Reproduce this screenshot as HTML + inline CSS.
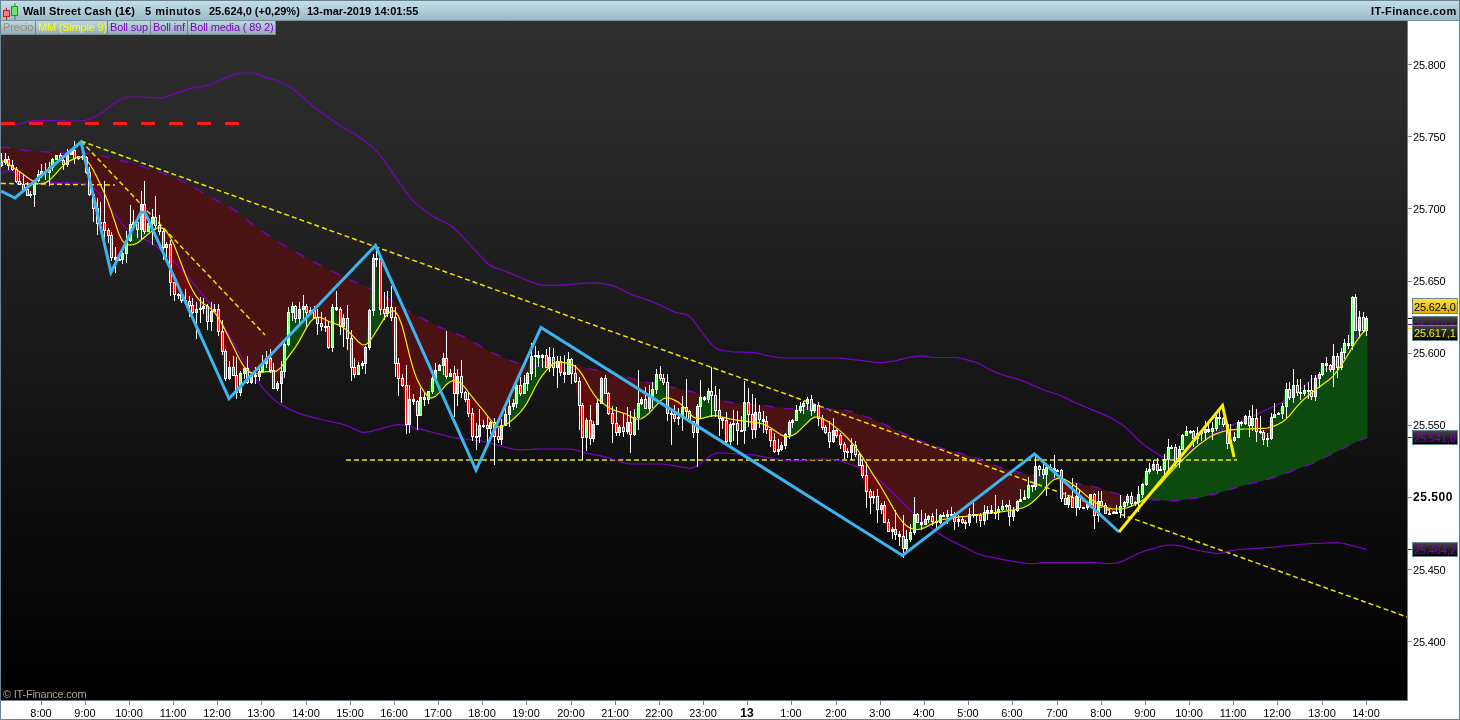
<!DOCTYPE html>
<html><head><meta charset="utf-8"><style>
*{margin:0;padding:0;box-sizing:border-box}
html,body{width:1460px;height:720px;overflow:hidden;background:#fff;font-family:"Liberation Sans",sans-serif}
#frame{position:absolute;left:0;top:0;width:1460px;height:720px;border:1px solid #6b838e}
#hdr{position:absolute;left:1px;top:1px;width:1458px;height:20px;background:linear-gradient(#c1dfeb,#9cbbc8);border-bottom:1px solid #7d939c}
#hdr span{will-change:transform;position:absolute;top:4px;font-size:11px;line-height:12px;font-weight:bold;color:#000;white-space:nowrap}
#leg{position:absolute;left:1px;top:21px;height:14px;display:flex}
#leg div span{will-change:transform;display:inline-block}
#leg div{height:14px;font-size:11px;line-height:13px;padding:0 0 0 2px;overflow:hidden;letter-spacing:-0.15px;background:linear-gradient(#bcd6e2,#96aeba);border-right:1px solid #6f858e;border-bottom:1px solid #7a8f98;white-space:nowrap}
.tk{position:absolute;left:1408px;width:4px;height:1px;background:#6c8a98}
.yl{will-change:transform;position:absolute;left:1413px;font-size:11px;line-height:14px;color:#000;letter-spacing:-0.2px}
.tt{position:absolute;top:701px;width:1px;height:4px;background:#6c8a98}
.xl{will-change:transform;position:absolute;top:707px;width:60px;text-align:center;font-size:11px;line-height:13px;color:#000}
.lab span{will-change:transform;display:inline-block}
.lab{position:absolute;left:1412px;width:46px;height:16px;font-size:11px;line-height:14px;padding-left:1px;border:1px solid #6a8894;letter-spacing:-0.15px}
.mk{position:absolute;left:1408px;width:4px;height:1px}
</style></head><body>
<div id="frame"></div>
<div id="hdr">
<svg style="position:absolute;left:0;top:0" width="20" height="20" viewBox="0 0 20 20">
<rect x="5" y="7" width="1" height="12" fill="#c02020"/>
<rect x="2.5" y="9.5" width="6" height="6" fill="#f08080" stroke="#c02020" stroke-width="1"/>
<rect x="13.5" y="2" width="1" height="17" fill="#10a010"/>
<rect x="10.5" y="5.5" width="6" height="9" fill="#70e070" stroke="#10a010" stroke-width="1"/>
</svg>
<span style="left:22px;letter-spacing:0.15px">Wall Street Cash (1€)</span>
<span style="left:144px;letter-spacing:0.5px">5 minutos</span>
<span style="left:208px">25.624,0 (+0,29%)</span>
<span style="left:306px">13-mar-2019 14:01:55</span>
<span style="right:2px;letter-spacing:0.4px">IT-Finance.com</span>
</div>
<svg width="1406" height="679" viewBox="1 21 1406 679" style="position:absolute;left:1px;top:21px">
<defs><linearGradient id="bg" x1="0" y1="0" x2="0" y2="1"><stop offset="0" stop-color="#303030"/><stop offset="0.98" stop-color="#000"/></linearGradient></defs>
<rect x="1" y="21" width="1406" height="679" fill="url(#bg)"/>
<polygon fill="#4a1212" points="0.8,162 4.5,159 8.2,165 11.9,169 15.6,181 19.3,184 22.9,189 26.6,195 30.3,194 34,180 37.7,174 41.3,171 45,172 48.7,167 52.4,159 56.1,155 59.7,160 63.4,164 67.1,154 68,153 68,153 67.1,153 63.4,153 59.7,152.9 56.1,152.6 52.4,152.3 48.7,152 45,151.8 41.3,151.5 37.7,151.3 34,151.1 30.3,150.9 26.6,150.6 22.9,150.1 19.3,149.5 15.6,148.7 11.9,147.9 8.2,147.5 4.5,147.5 0.8,147.8"/>
<polygon fill="#4a1212" points="72.2,153 74.5,158 78.2,156 81.8,157 85.5,172 89.2,194 92.9,208 96.6,223 100.2,222 103.9,230 107.6,235 111.3,257 115,259 118.6,259 122.3,253 126,240 129.7,224 133.4,222 137,229 140.7,204 144.4,231 148.1,223 151.8,217 155.5,225 159.1,231 162.8,247 166.5,244 170.2,282 173.9,294 177.5,294 181.2,300 184.9,301 188.6,305 192.3,312 195.9,309 199.6,308 203.3,306 207,321 210.7,311 214.3,309 218,331 221.7,351 225.4,378 229.1,367 232.8,375 236.4,392 240.1,373 243.8,368 247.5,382 251.2,375 254.8,376 258.5,371 262.2,363 265.9,358 269.6,370 273.2,388 276.9,383 280.6,371 284.3,344 288,312 291.6,306 295.3,318 299,309 302.7,306 306.4,312 310.1,310 313.7,317 317.4,323 321.1,326 324.8,326 328.5,347 332.1,307 335.8,309 339.5,326 343.2,318 346.9,338 350.5,367 354.2,374 357.9,365 361.6,363 365.3,347 368.9,310 370.4,289 370.4,289 368.9,288.2 365.3,286.3 361.6,284.6 357.9,283.2 354.2,281.7 350.5,280.1 346.9,278.4 343.2,276.6 339.5,274.8 335.8,272.9 332.1,271.1 328.5,269.2 324.8,267.4 321.1,265.5 317.4,263.7 313.7,261.9 310.1,260 306.4,258 302.7,255.9 299,253.9 295.3,251.8 291.6,249.8 288,247.7 284.3,245.5 280.6,243.2 276.9,240.9 273.2,238.6 269.6,236.2 265.9,233.8 262.2,231.2 258.5,228.6 254.8,226 251.2,223.2 247.5,220.4 243.8,217.3 240.1,214.3 236.4,211.4 232.8,209 229.1,206.9 225.4,205 221.7,203.1 218,201.2 214.3,199.3 210.7,197.3 207,195.2 203.3,193 199.6,190.8 195.9,188.6 192.3,186.4 188.6,184.5 184.9,182.8 181.2,181.1 177.5,179.5 173.9,177.9 170.2,176.3 166.5,174.7 162.8,173.3 159.1,172 155.5,170.8 151.8,169.6 148.1,168.5 144.4,167.4 140.7,166.4 137,165.3 133.4,164.2 129.7,163.1 126,161.9 122.3,160.8 118.6,159.8 115,158.9 111.3,158 107.6,157.1 103.9,156.2 100.2,155.2 96.6,154.5 92.9,154 89.2,153.6 85.5,153.3 81.8,153.1 78.2,153 74.5,153 72.2,153"/>
<polygon fill="#4a1212" points="378.9,293.6 380,309 383.7,313 387.4,307 391,317 394.7,363 398.4,378 402.1,385 405.8,424 409.4,399 413.1,401 416.8,415 420.5,397 424.2,399 427.8,391 431.5,378 435.2,370 438.9,365 442.6,358 446.2,376 449.9,373 453.6,393 457.3,376 461,392 464.7,399 468.3,413 472,436 475.7,436 479.4,425 483.1,425 486.7,428 490.4,422 494.1,436 497.8,439 501.5,425 505.1,414 508.8,406 512.5,403 516.2,385 519.9,393 523.6,383 527.2,373 528.9,365.3 528.9,365.3 527.2,365.1 523.6,364.5 519.9,363.7 516.2,362.5 512.5,361 508.8,359.5 505.1,358.1 501.5,356.6 497.8,355.1 494.1,353.6 490.4,352 486.7,350 483.1,347.8 479.4,345.6 475.7,343.4 472,341.2 468.3,339 464.7,337.1 461,335.5 457.3,334.1 453.6,332.7 449.9,331.3 446.2,329.9 442.6,328.4 438.9,326.8 435.2,325.1 431.5,323.3 427.8,321.4 424.2,319.6 420.5,317.7 416.8,315.8 413.1,313.8 409.4,311.5 405.8,309.2 402.1,306.9 398.4,304.6 394.7,302.4 391,300.3 387.4,298.3 383.7,296.3 380,294.2 378.9,293.6"/>
<polygon fill="#4a1212" points="545.5,366.7 545.6,367 545.7,366.7 545.7,366.7 545.6,366.7 545.5,366.7"/>
<polygon fill="#4a1212" points="552.7,366.3 553,367 553.4,366.3 553.4,366.3 553,366.3 552.7,366.3"/>
<polygon fill="#4a1212" points="558.4,366 560.4,372 564,374 566.1,365.6 566.1,365.6 564,365.7 560.4,365.9 558.4,366"/>
<polygon fill="#4a1212" points="569.4,365.4 571.4,373 575.1,381 578.8,405 582.4,437 586.1,420 589.8,438 593.5,424 597.2,403 600.9,378 604.5,393 608.2,413 611.9,423 615.6,432 619.3,427 622.9,431 626.6,422 630.3,434 634,417 637.7,403 641.3,399 645,408 648.7,397 652.4,389 653.7,383.7 653.7,383.7 652.4,383.5 648.7,382.7 645,382 641.3,381.2 637.7,380.2 634,379.1 630.3,377.9 626.6,376.7 622.9,375.5 619.3,374.4 615.6,373.3 611.9,372.5 608.2,371.9 604.5,371.3 600.9,370.7 597.2,370.1 593.5,369.5 589.8,368.8 586.1,367.8 582.4,366.6 578.8,365.7 575.1,365.3 571.4,365.3 569.4,365.4"/>
<polygon fill="#4a1212" points="663.9,385.8 667.1,413 670.8,414 674.5,418 678.2,417 681.8,407 685.5,411 689.2,421 692.9,432 696.6,406 700.2,397 703.9,399 705.3,396 705.3,396 703.9,395.5 700.2,394.3 696.6,393.1 692.9,392 689.2,391 685.5,390.1 681.8,389.4 678.2,388.6 674.5,387.9 670.8,387.2 667.1,386.4 663.9,385.8"/>
<polygon fill="#4a1212" points="712,398 715,410 718.6,418 722.3,420 726,441 729.7,424 733.4,423 737,430 740.7,430 744.2,403.7 744.2,403.7 740.7,403.4 737,403.1 733.4,402.8 729.7,402.2 726,401.5 722.3,400.6 718.6,399.7 715,398.7 712,398"/>
<polygon fill="#4a1212" points="744.9,403.7 748.1,414 751.8,429 755.5,412 759.1,419 762.8,421 766.5,429 770.2,440 773.9,451 777.5,449 781.2,445 784.9,434 788.6,422 792.3,420 795.9,410 796.9,409 796.9,409 795.9,409 792.3,408.9 788.6,408.7 784.9,408.3 781.2,407.8 777.5,407.3 773.9,406.8 770.2,406.4 766.5,405.9 762.8,405.4 759.1,405 755.5,404.6 751.8,404.3 748.1,404 744.9,403.7"/>
<polygon fill="#4a1212" points="810.3,409 810.7,410 811.4,409 811.4,409 810.7,409 810.3,409"/>
<polygon fill="#4a1212" points="815.5,409 818,418 821.7,427 825.4,432 829.1,441 832.8,430 836.4,435 840.1,444 843.8,451 847.5,452 851.2,445 854.8,454 858.5,465 862.2,475 865.9,491 869.6,497 873.2,496 876.9,509 880.6,505 884.3,522 888,531 891.7,529 895.3,534 899,536 902.7,548 906.4,539 910.1,532 913.7,514 917.4,522 921.1,524 924.8,519 928.5,516 932.1,521 935.8,522 939.5,515 943.2,516 946.9,514 950.5,514 954.2,521 957.9,519 961.6,522 965.3,522 969,514 972.6,514 976.3,515 980,520 983.7,512 987.4,510 991,512 994.7,512 998.4,509 1002.1,506 1005.8,505 1009.4,516 1013.1,510 1016.8,501 1020.5,499 1024.2,497 1027.8,485 1031.5,486 1033.5,475.5 1033.5,475.5 1031.5,475.2 1027.8,474.4 1024.2,473.6 1020.5,472.7 1016.8,471.8 1013.1,470.9 1009.4,470.1 1005.8,469.1 1002.1,467.9 998.4,466.5 994.7,465.2 991,463.8 987.4,462.4 983.7,461.1 980,459.7 976.3,458.3 972.6,457 969,455.8 965.3,454.7 961.6,453.7 957.9,452.7 954.2,451.7 950.5,450.7 946.9,449.6 943.2,448.6 939.5,447.6 935.8,446.6 932.1,445.5 928.5,444.2 924.8,442.7 921.1,441.1 917.4,439.5 913.7,437.8 910.1,436.2 906.4,434.6 902.7,432.9 899,431.2 895.3,429.5 891.7,427.8 888,426.1 884.3,424.4 880.6,422.7 876.9,421 873.2,419.5 869.6,418 865.9,416.8 862.2,415.5 858.5,414.2 854.8,413 851.2,411.7 847.5,410.8 843.8,410.2 840.1,409.9 836.4,409.6 832.8,409.3 829.1,409.1 825.4,409 821.7,409 818,409 815.5,409"/>
<polygon fill="#4a1212" points="1058.6,479.7 1061,498 1064.7,504 1068.3,497 1072,507 1075.7,496 1079.4,507 1083.1,507 1086.7,504 1090.4,494 1094.1,515 1097.8,501 1101.5,505 1105.1,513 1108.8,513 1112.5,512 1116.2,512 1119.9,506 1123.6,502 1127.2,496 1130.9,503 1134.6,502 1136.6,497.7 1136.6,497.7 1134.6,497.4 1130.9,496.7 1127.2,495.9 1123.6,495.2 1119.9,494.4 1116.2,493.5 1112.5,492.4 1108.8,491.3 1105.1,490.2 1101.5,489 1097.8,487.9 1094.1,486.9 1090.4,486.1 1086.7,485.3 1083.1,484.6 1079.4,483.9 1075.7,483.1 1072,482.4 1068.3,481.7 1064.7,480.9 1061,480.2 1058.6,479.7"/>
<polygon fill="#0d4a0d" points="68,153 70.8,150 72.2,153 72.2,153 70.8,153 68,153"/>
<polygon fill="#0d4a0d" points="370.4,289 372.6,258 376.3,258 378.9,293.6 378.9,293.6 376.3,292.2 372.6,290.2 370.4,289"/>
<polygon fill="#0d4a0d" points="528.9,365.3 530.9,356 534.6,355 538.3,357 542,355 545.5,366.7 545.5,366.7 542,366.8 538.3,366.6 534.6,366.2 530.9,365.6 528.9,365.3"/>
<polygon fill="#0d4a0d" points="545.7,366.7 549.3,357 552.7,366.3 552.7,366.3 549.3,366.5 545.7,366.7"/>
<polygon fill="#0d4a0d" points="553.4,366.3 556.7,361 558.4,366 558.4,366 556.7,366.1 553.4,366.3"/>
<polygon fill="#0d4a0d" points="566.1,365.6 567.7,359 569.4,365.4 569.4,365.4 567.7,365.5 566.1,365.6"/>
<polygon fill="#0d4a0d" points="653.7,383.7 656.1,374 659.7,378 663.4,382 663.9,385.8 663.9,385.8 663.4,385.7 659.7,384.9 656.1,384.2 653.7,383.7"/>
<polygon fill="#0d4a0d" points="705.3,396 707.6,391 711.3,395 712,398 712,398 711.3,397.8 707.6,396.7 705.3,396"/>
<polygon fill="#0d4a0d" points="744.2,403.7 744.4,402 744.9,403.7 744.9,403.7 744.4,403.7 744.2,403.7"/>
<polygon fill="#0d4a0d" points="796.9,409 799.6,406 803.3,403 807,399 810.3,409 810.3,409 807,409 803.3,409 799.6,409 796.9,409"/>
<polygon fill="#0d4a0d" points="811.4,409 814.4,405 815.5,409 815.5,409 814.4,409 811.4,409"/>
<polygon fill="#0d4a0d" points="1033.5,475.5 1035.2,466 1038.9,469 1042.6,474 1046.3,467 1049.9,468 1053.6,470 1057.3,470 1058.6,479.7 1058.6,479.7 1057.3,479.5 1053.6,478.8 1049.9,478.2 1046.3,477.6 1042.6,477 1038.9,476.4 1035.2,475.8 1033.5,475.5"/>
<polygon fill="#0d4a0d" points="1136.6,497.7 1138.3,494 1142,484 1145.6,471 1149.3,469 1153,464 1156.7,470 1160.4,469 1164,459 1167.7,447 1171.4,447 1175.1,461 1178.8,449 1182.5,435 1186.1,431 1189.8,431 1193.5,438 1197.2,433 1200.9,432 1204.5,429 1208.2,431 1211.9,428 1215.6,417 1219.3,418 1222.9,424 1226.6,443 1230.3,440 1234,437 1237.7,422 1241.3,423 1245,416 1248.7,425 1252.4,418 1256.1,431 1259.8,432 1263.4,439 1267.1,438 1270.8,417 1274.5,414 1278.2,413 1281.8,406 1285.5,389 1289.2,397 1292.9,385 1296.6,392 1300.2,393 1303.9,390 1307.6,390 1311.3,396 1315,378 1318.6,374 1322.3,363 1326,365 1329.7,369 1333.4,356 1337.1,367 1340.7,352 1344.4,343 1348.1,345 1351.8,297 1355.5,330 1359.1,317 1362.8,330 1366.5,318 1367.5,318 1367.5,438.1 1366.5,438.1 1362.8,439 1359.1,440.6 1355.5,442.3 1351.8,444.1 1348.1,446 1344.4,447.8 1340.7,449.6 1337.1,451.5 1333.4,453.3 1329.7,455.2 1326,457 1322.3,458.8 1318.6,460.7 1315,462.4 1311.3,463.9 1307.6,465.3 1303.9,466.7 1300.2,468 1296.6,469.4 1292.9,470.8 1289.2,472.1 1285.5,473.4 1281.8,474.7 1278.2,476.1 1274.5,477.4 1270.8,478.6 1267.1,479.7 1263.4,480.6 1259.8,481.5 1256.1,482.3 1252.4,483.2 1248.7,484.1 1245,485.1 1241.3,486.1 1237.7,487.2 1234,488.3 1230.3,489.4 1226.6,490.5 1222.9,491.6 1219.3,492.6 1215.6,493.6 1211.9,494.5 1208.2,495.4 1204.5,496.4 1200.9,497.2 1197.2,497.9 1193.5,498.4 1189.8,498.9 1186.1,499.4 1182.5,500 1178.8,500.5 1175.1,500.8 1171.4,500.8 1167.7,500.7 1164,500.5 1160.4,500.3 1156.7,500.2 1153,499.9 1149.3,499.5 1145.6,499 1142,498.5 1138.3,498 1136.6,497.7"/>
<polygon fill="#680a0a" points="0.8,162 2.3,160.8 2.3,160.8 0.8,160.2"/>
<polygon fill="#680a0a" points="7.3,163.5 8.2,165 11.9,169 15.6,181 19.3,184 22.9,189 26.6,195 30.3,194 33.5,181.7 33.5,181.7 30.3,179.5 26.6,176.7 22.9,173.9 19.3,171.4 15.6,169 11.9,166.5 8.2,164.1 7.3,163.5"/>
<polygon fill="#680a0a" points="82,157.5 85.5,172 89.2,194 92.9,208 96.6,223 100.2,222 103.9,230 107.6,235 111.3,257 115,259 118.6,259 122.3,253 125,243.5 125,243.5 122.3,240.7 118.6,233.3 115,222.2 111.3,211.1 107.6,201 103.9,192 100.2,184 96.6,176.4 92.9,169.2 89.2,163.3 85.5,159.2 82,157.5"/>
<polygon fill="#680a0a" points="157.2,227.9 159.1,231 162.8,247 166.5,244 170.2,282 173.9,294 177.5,294 181.2,300 184.9,301 188.6,305 192.3,312 195.9,309 199.6,308 203.3,306 207,321 210.7,311 212.3,310.1 212.3,310.1 210.7,308.6 207,305.9 203.3,303.7 199.6,300.4 195.9,295.9 192.3,289.8 188.6,282.3 184.9,273.2 181.2,263.5 177.5,253.9 173.9,244.6 170.2,237.2 166.5,231.6 162.8,228.3 159.1,227.3 157.2,227.9"/>
<polygon fill="#680a0a" points="215,312.9 218,331 221.7,351 225.4,378 229.1,367 232.8,375 236.4,392 240.1,373 243.8,368 247.5,382 251.2,375 254.8,376 256.5,373.7 256.5,373.7 254.8,373.9 251.2,373.1 247.5,370.6 243.8,366.4 240.1,360.2 236.4,352.9 232.8,345.5 229.1,338.1 225.4,330.8 221.7,323.4 218,317.1 215,312.9"/>
<polygon fill="#680a0a" points="269.9,371.7 273.2,388 276.9,383 280.6,371 281.1,367.1 281.1,367.1 280.6,367.8 276.9,370.9 273.2,371.8 269.9,371.7"/>
<polygon fill="#680a0a" points="314.5,318.3 317.4,323 321.1,326 324.8,326 328.5,347 330.7,322.2 330.7,322.2 328.5,321.2 324.8,319.2 321.1,317.6 317.4,317.1 314.5,318.3"/>
<polygon fill="#680a0a" points="339.4,325.4 339.5,326 339.7,325.5 339.7,325.5 339.5,325.4 339.4,325.4"/>
<polygon fill="#680a0a" points="345.2,329 346.9,338 350.5,367 354.2,374 357.9,365 361.6,363 365.3,347 365.5,344.8 365.5,344.8 365.3,344.9 361.6,344.5 357.9,341.3 354.2,337.4 350.5,333.5 346.9,330.2 345.2,329"/>
<polygon fill="#680a0a" points="389.4,312.4 391,317 394.7,363 398.4,378 402.1,385 405.8,424 409.4,399 413.1,401 416.8,415 420.5,397 424.2,399 426.3,394.4 426.3,394.4 424.2,391.9 420.5,386.1 416.8,378.8 413.1,368.4 409.4,354.9 405.8,340 402.1,325.7 398.4,316 394.7,310.8 391,311.2 389.4,312.4"/>
<polygon fill="#680a0a" points="451.4,381.2 453.6,393 456.2,380.9 456.2,380.9 453.6,380.4 451.4,381.2"/>
<polygon fill="#680a0a" points="458.7,382 461,392 464.7,399 468.3,413 472,436 475.7,436 479.4,425 483.1,425 486.7,428 490.4,422 494.1,436 497.8,439 501,426.9 501,426.9 497.8,426.8 494.1,424.3 490.4,419.7 486.7,414.9 483.1,410.2 479.4,405.8 475.7,401.3 472,396.7 468.3,392 464.7,387.1 461,383.4 458.7,382"/>
<polygon fill="#680a0a" points="552.1,364.7 553,367 555.7,362.6 555.7,362.6 553,363.9 552.1,364.7"/>
<polygon fill="#680a0a" points="557.1,362.1 560.4,372 564,374 566.7,363 566.7,363 564,362.6 560.4,361.9 557.1,362.1"/>
<polygon fill="#680a0a" points="568.9,363.6 571.4,373 575.1,381 578.8,405 582.4,437 586.1,420 589.8,438 593.5,424 597.2,403 597.7,399.1 597.7,399.1 597.2,398.6 593.5,393.9 589.8,388 586.1,381.2 582.4,374.9 578.8,369.9 575.1,366.3 571.4,364.4 568.9,363.6"/>
<polygon fill="#680a0a" points="607,406.3 608.2,413 611.9,423 615.6,432 619.3,427 622.9,431 626.6,422 630.3,434 633.7,418.3 633.7,418.3 630.3,416.4 626.6,414.1 622.9,413 619.3,411.9 615.6,410.8 611.9,409.2 608.2,407.1 607,406.3"/>
<polygon fill="#680a0a" points="665.4,398.2 667.1,413 670.8,414 674.5,418 678.2,417 681.8,407 685.5,411 689.2,421 692.9,432 694.9,417.8 694.9,417.8 692.9,416.8 689.2,413.2 685.5,408.9 681.8,405.1 678.2,402.1 674.5,400.1 670.8,398.5 667.1,397.7 665.4,398.2"/>
<polygon fill="#680a0a" points="717.7,415.9 718.6,418 722.3,420 726,441 729.7,424 733.4,423 737,430 740.7,430 741.9,420.8 741.9,420.8 740.7,420.6 737,420.1 733.4,419.5 729.7,418.8 726,417.9 722.3,417 718.6,416 717.7,415.9"/>
<polygon fill="#680a0a" points="750.1,422 751.8,429 753.2,422.4 753.2,422.4 751.8,422.2 750.1,422"/>
<polygon fill="#680a0a" points="764.5,424.6 766.5,429 770.2,440 773.9,451 777.5,449 781.2,445 784.2,436.1 784.2,436.1 781.2,434.9 777.5,432.5 773.9,430 770.2,427.5 766.5,425.4 764.5,424.6"/>
<polygon fill="#680a0a" points="817.7,416.9 818,418 821.7,427 825.4,432 829.1,441 832.8,430 836.4,435 840.1,444 843.8,451 847.5,452 851.2,445 854.8,454 858.5,465 862.2,475 865.9,491 869.6,497 873.2,496 876.9,509 880.6,505 884.3,522 888,531 891.7,529 895.3,534 899,536 902.7,548 906.4,539 910.1,532 910.8,528.3 910.8,528.3 910.1,528 906.4,525.7 902.7,522.1 899,517.5 895.3,511.8 891.7,505.4 888,498.9 884.3,492.5 880.6,486.3 876.9,480.4 873.2,474.8 869.6,469 865.9,462.8 862.2,456.6 858.5,451.2 854.8,446.5 851.2,442.2 847.5,438 843.8,434.3 840.1,430.9 836.4,427.9 832.8,424.9 829.1,422.3 825.4,420.2 821.7,418.4 818,416.8 817.7,416.9"/>
<polygon fill="#680a0a" points="952.6,517.9 954.2,521 957.9,519 961.6,522 965.3,522 968.1,515.9 968.1,515.9 965.3,516.3 961.6,516.7 957.9,517.2 954.2,517.7 952.6,517.9"/>
<polygon fill="#680a0a" points="976.2,515 976.3,515 980,520 982.7,514.2 982.7,514.2 980,514.5 976.3,514.9 976.2,515"/>
<polygon fill="#680a0a" points="1007.7,510.8 1009.4,516 1013.1,510 1013.1,510 1009.4,510.6 1007.7,510.8"/>
<polygon fill="#680a0a" points="1058.4,478.3 1061,498 1064.7,504 1068.3,497 1072,507 1075.7,496 1079.4,507 1083.1,507 1086.7,504 1089,497.9 1089,497.9 1086.7,496 1083.1,492.9 1079.4,489.7 1075.7,486.8 1072,484 1068.3,481.5 1064.7,479.4 1061,478.3 1058.4,478.3"/>
<polygon fill="#680a0a" points="1091.5,499.9 1094.1,515 1097.1,503.6 1097.1,503.6 1094.1,501.8 1091.5,499.9"/>
<polygon fill="#680a0a" points="1101.8,505.7 1105.1,513 1108.8,513 1112.5,512 1116.2,512 1118,509 1118,509 1116.2,509 1112.5,508.8 1108.8,508.2 1105.1,507.1 1101.8,505.7"/>
<polygon fill="#680a0a" points="1224.3,431.2 1226.6,443 1230.3,440 1234,437 1235.8,429.5 1235.8,429.5 1234,429.6 1230.3,429.9 1226.6,430.6 1224.3,431.2"/>
<polygon fill="#680a0a" points="1255.4,428.6 1256.1,431 1259.8,432 1263.4,439 1267.1,438 1268.9,427.6 1268.9,427.6 1267.1,428 1263.4,428.3 1259.8,428.4 1256.1,428.6 1255.4,428.6"/>
<polygon fill="#680a0a" points="1310.1,394.1 1311.3,396 1312,392.5 1312,392.5 1311.3,393.1 1310.1,394.1"/>
<polygon fill="#0d4a0d" points="2.3,160.8 4.5,159 7.3,163.5 7.3,163.5 4.5,161.7 2.3,160.8"/>
<polygon fill="#0d4a0d" points="33.5,181.7 34,180 37.7,174 41.3,171 45,172 48.7,167 52.4,159 56.1,155 59.7,160 63.4,164 67.1,154 70.8,150 74.5,158 78.2,156 81.8,157 82,157.5 82,157.5 81.8,157.4 78.2,157.4 74.5,158.5 70.8,160.4 67.1,162.6 63.4,165.6 59.7,169.2 56.1,173.3 52.4,177.4 48.7,180.7 45,182.9 41.3,183.8 37.7,183.5 34,182 33.5,181.7"/>
<polygon fill="#0d4a0d" points="125,243.5 126,240 129.7,224 133.4,222 137,229 140.7,204 144.4,231 148.1,223 151.8,217 155.5,225 157.2,227.9 157.2,227.9 155.5,228.5 151.8,231.3 148.1,234.3 144.4,237.3 140.7,240.5 137,243.2 133.4,244.6 129.7,244.9 126,244.5 125,243.5"/>
<polygon fill="#0d4a0d" points="212.3,310.1 214.3,309 215,312.9 215,312.9 214.3,312 212.3,310.1"/>
<polygon fill="#0d4a0d" points="256.5,373.7 258.5,371 262.2,363 265.9,358 269.6,370 269.9,371.7 269.9,371.7 269.6,371.7 265.9,371.6 262.2,372.3 258.5,373.5 256.5,373.7"/>
<polygon fill="#0d4a0d" points="281.1,367.1 284.3,344 288,312 291.6,306 295.3,318 299,309 302.7,306 306.4,312 310.1,310 313.7,317 314.5,318.3 314.5,318.3 313.7,318.6 310.1,322.2 306.4,327.9 302.7,334.6 299,341.4 295.3,347.3 291.6,352.3 288,357.4 284.3,362.9 281.1,367.1"/>
<polygon fill="#0d4a0d" points="330.7,322.2 332.1,307 335.8,309 339.4,325.4 339.4,325.4 335.8,324 332.1,322.8 330.7,322.2"/>
<polygon fill="#0d4a0d" points="339.7,325.5 343.2,318 345.2,329 345.2,329 343.2,327.5 339.7,325.5"/>
<polygon fill="#0d4a0d" points="365.5,344.8 368.9,310 372.6,258 376.3,258 380,309 383.7,313 387.4,307 389.4,312.4 389.4,312.4 387.4,314 383.7,319.2 380,325.2 376.3,331.1 372.6,337 368.9,342.3 365.5,344.8"/>
<polygon fill="#0d4a0d" points="426.3,394.4 427.8,391 431.5,378 435.2,370 438.9,365 442.6,358 446.2,376 449.9,373 451.4,381.2 451.4,381.2 449.9,381.7 446.2,384.7 442.6,389.1 438.9,393.1 435.2,396.6 431.5,398 427.8,396.4 426.3,394.4"/>
<polygon fill="#0d4a0d" points="456.2,380.9 457.3,376 458.7,382 458.7,382 457.3,381.1 456.2,380.9"/>
<polygon fill="#0d4a0d" points="501,426.9 501.5,425 505.1,414 508.8,406 512.5,403 516.2,385 519.9,393 523.6,383 527.2,373 530.9,356 534.6,355 538.3,357 542,355 545.6,367 549.3,357 552.1,364.7 552.1,364.7 549.3,367.3 545.6,371.3 542,375.9 538.3,381.5 534.6,388.3 530.9,395.7 527.2,402.6 523.6,408.2 519.9,412.6 516.2,416.3 512.5,419.8 508.8,422.7 505.1,425 501.5,426.9 501,426.9"/>
<polygon fill="#0d4a0d" points="555.7,362.6 556.7,361 557.1,362.1 557.1,362.1 556.7,362.1 555.7,362.6"/>
<polygon fill="#0d4a0d" points="566.7,363 567.7,359 568.9,363.6 568.9,363.6 567.7,363.2 566.7,363"/>
<polygon fill="#0d4a0d" points="597.7,399.1 600.9,378 604.5,393 607,406.3 607,406.3 604.5,404.6 600.9,401.9 597.7,399.1"/>
<polygon fill="#0d4a0d" points="633.7,418.3 634,417 637.7,403 641.3,399 645,408 648.7,397 652.4,389 656.1,374 659.7,378 663.4,382 665.4,398.2 665.4,398.2 663.4,398.7 659.7,401.6 656.1,405.6 652.4,409.6 648.7,413.5 645,416.6 641.3,418.8 637.7,419.5 634,418.4 633.7,418.3"/>
<polygon fill="#0d4a0d" points="694.9,417.8 696.6,406 700.2,397 703.9,399 707.6,391 711.3,395 715,410 717.7,415.9 717.7,415.9 715,415.6 711.3,415.9 707.6,416.8 703.9,417.8 700.2,418.7 696.6,418.6 694.9,417.8"/>
<polygon fill="#0d4a0d" points="741.9,420.8 744.4,402 748.1,414 750.1,422 750.1,422 748.1,421.7 744.4,421.2 741.9,420.8"/>
<polygon fill="#0d4a0d" points="753.2,422.4 755.5,412 759.1,419 762.8,421 764.5,424.6 764.5,424.6 762.8,424 759.1,423.2 755.5,422.7 753.2,422.4"/>
<polygon fill="#0d4a0d" points="784.2,436.1 784.9,434 788.6,422 792.3,420 795.9,410 799.6,406 803.3,403 807,399 810.7,410 814.4,405 817.7,416.9 817.7,416.9 814.4,417.2 810.7,419.3 807,423 803.3,426.7 799.6,430.4 795.9,433.4 792.3,435.4 788.6,436.6 784.9,436.3 784.2,436.1"/>
<polygon fill="#0d4a0d" points="910.8,528.3 913.7,514 917.4,522 921.1,524 924.8,519 928.5,516 932.1,521 935.8,522 939.5,515 943.2,516 946.9,514 950.5,514 952.6,517.9 952.6,517.9 950.5,518.2 946.9,518.9 943.2,519.5 939.5,520.6 935.8,522.1 932.1,523.9 928.5,525.8 924.8,527.6 921.1,528.9 917.4,529.5 913.7,529.4 910.8,528.3"/>
<polygon fill="#0d4a0d" points="968.1,515.9 969,514 972.6,514 976.2,515 976.2,515 972.6,515.4 969,515.8 968.1,515.9"/>
<polygon fill="#0d4a0d" points="982.7,514.2 983.7,512 987.4,510 991,512 994.7,512 998.4,509 1002.1,506 1005.8,505 1007.7,510.8 1007.7,510.8 1005.8,511.1 1002.1,511.7 998.4,512.2 994.7,512.7 991,513.1 987.4,513.6 983.7,514 982.7,514.2"/>
<polygon fill="#0d4a0d" points="1013.1,510 1013.1,510 1016.8,501 1020.5,499 1024.2,497 1027.8,485 1031.5,486 1035.2,466 1038.9,469 1042.6,474 1046.3,467 1049.9,468 1053.6,470 1057.3,470 1058.4,478.3 1058.4,478.3 1057.3,478.3 1053.6,479.9 1049.9,482.9 1046.3,487.4 1042.6,492 1038.9,496.1 1035.2,499.8 1031.5,503 1027.8,505.6 1024.2,507.3 1020.5,508.5 1016.8,509.4 1013.1,510 1013.1,510"/>
<polygon fill="#0d4a0d" points="1089,497.9 1090.4,494 1091.5,499.9 1091.5,499.9 1090.4,499.1 1089,497.9"/>
<polygon fill="#0d4a0d" points="1097.1,503.6 1097.8,501 1101.5,505 1101.8,505.7 1101.8,505.7 1101.5,505.6 1097.8,504 1097.1,503.6"/>
<polygon fill="#0d4a0d" points="1118,509 1119.9,506 1123.6,502 1127.2,496 1130.9,503 1134.6,502 1138.3,494 1142,484 1145.6,471 1149.3,469 1153,464 1156.7,470 1160.4,469 1164,459 1167.7,447 1171.4,447 1175.1,461 1178.8,449 1182.5,435 1186.1,431 1189.8,431 1193.5,438 1197.2,433 1200.9,432 1204.5,429 1208.2,431 1211.9,428 1215.6,417 1219.3,418 1222.9,424 1224.3,431.2 1224.3,431.2 1222.9,431.5 1219.3,432.7 1215.6,434.1 1211.9,435.8 1208.2,438.1 1204.5,440.7 1200.9,443.3 1197.2,446.1 1193.5,449.2 1189.8,452.7 1186.1,456.4 1182.5,460 1178.8,463.7 1175.1,467.6 1171.4,471.5 1167.7,475.7 1164,479.8 1160.4,484 1156.7,487.9 1153,491.5 1149.3,494.7 1145.6,497.8 1142,500.6 1138.3,503 1134.6,504.8 1130.9,506.4 1127.2,507.8 1123.6,508.7 1119.9,509 1118,509"/>
<polygon fill="#0d4a0d" points="1235.8,429.5 1237.7,422 1241.3,423 1245,416 1248.7,425 1252.4,418 1255.4,428.6 1255.4,428.6 1252.4,428.7 1248.7,428.9 1245,429 1241.3,429.2 1237.7,429.4 1235.8,429.5"/>
<polygon fill="#0d4a0d" points="1268.9,427.6 1270.8,417 1274.5,414 1278.2,413 1281.8,406 1285.5,389 1289.2,397 1292.9,385 1296.6,392 1300.2,393 1303.9,390 1307.6,390 1310.1,394.1 1310.1,394.1 1307.6,396.2 1303.9,399.2 1300.2,402.8 1296.6,406.8 1292.9,411.3 1289.2,415.8 1285.5,419.6 1281.8,422.3 1278.2,424.2 1274.5,425.9 1270.8,427.2 1268.9,427.6"/>
<polygon fill="#0d4a0d" points="1312,392.5 1315,378 1318.6,374 1322.3,363 1326,365 1329.7,369 1333.4,356 1337.1,367 1340.7,352 1344.4,343 1348.1,345 1351.8,297 1355.5,330 1359.1,317 1362.8,330 1366.5,318 1367.5,318 1367.5,329.7 1366.5,329.7 1362.8,332.7 1359.1,337.3 1355.5,342.5 1351.8,348.2 1348.1,354.5 1344.4,360.5 1340.7,366 1337.1,371.1 1333.4,375.6 1329.7,379.3 1326,382.1 1322.3,384.8 1318.6,387.4 1315,390.2 1312,392.5"/>
<g stroke="#ece400" stroke-width="1.5" fill="none">
<line x1="81" y1="141" x2="1407" y2="617" stroke-dasharray="5,3"/>
<line x1="81" y1="141" x2="265" y2="335" stroke-dasharray="5,3"/>
<line x1="1" y1="183.5" x2="115" y2="185" stroke-dasharray="5,3"/>
<line x1="346" y1="460" x2="1237" y2="460" stroke-dasharray="5,3"/>
</g>
<polyline fill="none" stroke="#7d00c4" stroke-width="1.2" points="0.8,125 4.5,125 8.2,125 11.9,125 15.6,124.6 19.3,123.9 22.9,123 26.6,122 30.3,121.2 34,120.7 37.7,120.5 41.3,120.5 45,120.5 48.7,120.6 52.4,120.7 56.1,120.8 59.7,120.9 63.4,120.9 67.1,121 70.8,121 74.5,121 78.2,121 81.8,120.9 85.5,120.3 89.2,119.2 92.9,117.6 96.6,116 100.2,113.8 103.9,111.2 107.6,108.1 111.3,105.3 115,102.7 118.6,100.6 122.3,98.7 126,97.5 129.7,97 133.4,97 137,97 140.7,97 144.4,97.1 148.1,97.3 151.8,97.6 155.5,97.9 159.1,98.2 162.8,97.8 166.5,96.9 170.2,95.4 173.9,94 177.5,92.6 181.2,91.4 184.9,90.3 188.6,89.2 192.3,88.2 195.9,87.4 199.6,86.8 203.3,86.1 207,85.4 210.7,84.3 214.3,82.8 218,81 221.7,79.2 225.4,77.6 229.1,76.3 232.8,75.2 236.4,74.1 240.1,73.4 243.8,73 247.5,73 251.2,73 254.8,73.5 258.5,74.6 262.2,76.2 265.9,77.4 269.6,78.4 273.2,79.3 276.9,80.5 280.6,82 284.3,83.8 288,85.8 291.6,88 295.3,90.7 299,93.7 302.7,97.2 306.4,100.6 310.1,103.8 313.7,106.7 317.4,109.4 321.1,112.1 324.8,114.8 328.5,117.5 332.1,120.1 335.8,122.7 339.5,125.3 343.2,127.7 346.9,129.8 350.5,131.7 354.2,133.8 357.9,136.1 361.6,138.6 365.3,141.3 368.9,144.2 372.6,147.3 376.3,151.1 380,155.4 383.7,160.1 387.4,165.1 391,170.3 394.7,175.8 398.4,181.2 402.1,186.4 405.8,191.6 409.4,196.6 413.1,200.9 416.8,204.4 420.5,207.4 424.2,210.2 427.8,212.8 431.5,215.2 435.2,217.4 438.9,219.4 442.6,221.2 446.2,223 449.9,225 453.6,227.7 457.3,231.2 461,235.2 464.7,239.2 468.3,243.2 472,247.1 475.7,251 479.4,254.8 483.1,258.7 486.7,262.5 490.4,265.4 494.1,267.4 497.8,268.6 501.5,269.8 505.1,271.2 508.8,272.6 512.5,274.2 516.2,275.7 519.9,277.3 523.6,278.8 527.2,280.3 530.9,281.8 534.6,283.1 538.3,284.4 542,285.1 545.6,285.4 549.3,285.3 553,285.3 556.7,285.2 560.4,285.1 564,284.9 567.7,284.7 571.4,284.4 575.1,284 578.8,283.6 582.4,283.3 586.1,283.1 589.8,283 593.5,283 597.2,283.1 600.9,283.4 604.5,283.9 608.2,284.6 611.9,285.4 615.6,286.7 619.3,288.3 622.9,290.2 626.6,292.2 630.3,293.9 634,295.4 637.7,296.6 641.3,297.9 645,299.1 648.7,300.4 652.4,301.7 656.1,303.2 659.7,304.9 663.4,306.7 667.1,308.6 670.8,310.4 674.5,311.9 678.2,313 681.8,313.6 685.5,314.3 689.2,316.1 692.9,319.7 696.6,324.8 700.2,330 703.9,335 707.6,339.6 711.3,344.3 715,347.6 718.6,349.7 722.3,350.3 726,351 729.7,351.5 733.4,351.8 737,352 740.7,352.1 744.4,352.2 748.1,352.3 751.8,352.4 755.5,352.9 759.1,353.6 762.8,354.5 766.5,355.4 770.2,356.1 773.9,356.7 777.5,357.3 781.2,357.7 784.9,357.9 788.6,358 792.3,358 795.9,358 799.6,358 803.3,358 807,358 810.7,358 814.4,358 818,358 821.7,358 825.4,358 829.1,358 832.8,358 836.4,358 840.1,358.2 843.8,358.5 847.5,358.9 851.2,359.3 854.8,359.8 858.5,360.2 862.2,360.7 865.9,361.1 869.6,361.6 873.2,362.1 876.9,362.5 880.6,362.6 884.3,362.4 888,361.9 891.7,361.4 895.3,360.8 899,359.9 902.7,358.9 906.4,358 910.1,357.2 913.7,356.6 917.4,356.2 921.1,355.9 924.8,356.2 928.5,356.8 932.1,357.3 935.8,357.5 939.5,357.5 943.2,357.5 946.9,357.5 950.5,357.5 954.2,357.5 957.9,357.9 961.6,358.5 965.3,359.4 969,360.4 972.6,361.3 976.3,362.5 980,364.1 983.7,366.2 987.4,368.3 991,370.2 994.7,371.9 998.4,373.4 1002.1,374.7 1005.8,375.9 1009.4,376.9 1013.1,377.9 1016.8,378.9 1020.5,380 1024.2,381.4 1027.8,382.9 1031.5,384.6 1035.2,386.2 1038.9,387.9 1042.6,389.5 1046.3,391 1049.9,392 1053.6,393 1057.3,394.2 1061,395.8 1064.7,397.6 1068.3,399.3 1072,401.1 1075.7,402.7 1079.4,404.4 1083.1,405.9 1086.7,407.5 1090.4,409.1 1094.1,410.6 1097.8,412.1 1101.5,413.6 1105.1,415.1 1108.8,416.7 1112.5,418.7 1116.2,420.9 1119.9,423.3 1123.6,425.9 1127.2,428.9 1130.9,432.4 1134.6,436.1 1138.3,439.8 1142,443.1 1145.6,446.1 1149.3,448.6 1153,451.1 1156.7,453.6 1160.4,455.8 1164,457.2 1167.7,458 1171.4,457.9 1175.1,457 1178.8,455.4 1182.5,453.6 1186.1,451.8 1189.8,450 1193.5,448 1197.2,445.7 1200.9,443.1 1204.5,440.3 1208.2,437.6 1211.9,434.9 1215.6,432.6 1219.3,430.7 1222.9,429.1 1226.6,427.6 1230.3,426 1234,424.4 1237.7,422.8 1241.3,421.2 1245,419.5 1248.7,417.9 1252.4,416.3 1256.1,414.6 1259.8,412.9 1263.4,411.2 1267.1,409.5 1270.8,407.7 1274.5,406 1278.2,404.2 1281.8,402.4 1285.5,400.3 1289.2,397.7 1292.9,394.8 1296.6,391.9 1300.2,389.1 1303.9,386.2 1307.6,383.3 1311.3,380.4 1315,377.6 1318.6,374.8 1322.3,372 1326,369.2 1329.7,366.5 1333.4,363.4 1337.1,359.7 1340.7,355.3 1344.4,350.7 1348.1,346.1 1351.8,341.6 1355.5,337.2 1359.1,333.2 1362.8,329.4 1366.5,326.8"/>
<polyline fill="none" stroke="#7d00c4" stroke-width="1.2" points="0.8,173.7 4.5,171.9 8.2,170.5 11.9,171.4 15.6,172.7 19.3,174.3 22.9,176.2 26.6,178.1 30.3,179.7 34,180.9 37.7,181.5 41.3,182 45,182.2 48.7,182.2 52.4,182.3 56.1,182.4 59.7,182.5 63.4,182.6 67.1,182.7 70.8,182.8 74.5,182.9 78.2,183.2 81.8,183.5 85.5,184.1 89.2,185.3 92.9,187.2 96.6,190.6 100.2,195.2 103.9,200.4 107.6,205.3 111.3,209.8 115,214.3 118.6,219 122.3,223.9 126,228 129.7,231.1 133.4,233.2 137,235 140.7,236.9 144.4,238.9 148.1,241 151.8,243.2 155.5,245.7 159.1,248.6 162.8,251.8 166.5,255.1 170.2,258.3 173.9,261.7 177.5,265.4 181.2,269.5 184.9,273.6 188.6,277.8 192.3,282 195.9,286.3 199.6,290.8 203.3,295.4 207,300 210.7,304.6 214.3,309.7 218,315.6 221.7,322.1 225.4,328.7 229.1,335.2 232.8,341.6 236.4,347.9 240.1,354.2 243.8,360.3 247.5,366.1 251.2,371.7 254.8,377.3 258.5,382.5 262.2,387.1 265.9,391.3 269.6,395.2 273.2,398.8 276.9,401.9 280.6,404.4 284.3,406.4 288,408.4 291.6,410.1 295.3,411.8 299,413.4 302.7,414.6 306.4,415.7 310.1,416.6 313.7,417.6 317.4,418.5 321.1,419.5 324.8,420.4 328.5,421.2 332.1,421.9 335.8,422.7 339.5,423.4 343.2,424.3 346.9,425.6 350.5,427.3 354.2,429.1 357.9,430.8 361.6,432.1 365.3,432.4 368.9,431.9 372.6,430.9 376.3,429.8 380,428.8 383.7,427.8 387.4,426.8 391,425.9 394.7,425.1 398.4,424.6 402.1,424.8 405.8,425.5 409.4,426.4 413.1,427.3 416.8,428.3 420.5,429.2 424.2,430.2 427.8,431.1 431.5,432 435.2,433 438.9,434 442.6,434.9 446.2,435.9 449.9,436.8 453.6,437.5 457.3,438.1 461,438.6 464.7,439 468.3,439.5 472,439.9 475.7,440.3 479.4,440.7 483.1,441.3 486.7,442.1 490.4,443.1 494.1,444.1 497.8,445.1 501.5,446.1 505.1,447.2 508.8,448.2 512.5,449.2 516.2,449.7 519.9,449.8 523.6,449.7 527.2,449.5 530.9,449.4 534.6,449.2 538.3,449.1 542,449 545.6,449 549.3,449 553,449 556.7,449 560.4,449 564,449 567.7,449 571.4,449.2 575.1,449.8 578.8,450.8 582.4,451.8 586.1,452.9 589.8,453.8 593.5,454.6 597.2,455.1 600.9,455.8 604.5,456.7 608.2,457.8 611.9,459 615.6,460.2 619.3,461.4 622.9,462.5 626.6,463.4 630.3,463.9 634,464 637.7,464 641.3,464 645,464 648.7,464 652.4,464 656.1,464 659.7,464 663.4,464.1 667.1,464.5 670.8,465.1 674.5,465.7 678.2,466.4 681.8,467.1 685.5,467.7 689.2,468.3 692.9,467.7 696.6,466 700.2,463.3 703.9,460.6 707.6,457.9 711.3,455.2 715,453.5 718.6,452.8 722.3,453 726,453.2 729.7,453.5 733.4,453.7 737,453.9 740.7,454.1 744.4,454.4 748.1,454.6 751.8,454.8 755.5,455.2 759.1,455.8 762.8,456.6 766.5,457.3 770.2,457.9 773.9,458.5 777.5,459 781.2,459.5 784.9,460 788.6,460.5 792.3,460.7 795.9,460.8 799.6,460.5 803.3,460.3 807,460 810.7,459.8 814.4,459.5 818,459.3 821.7,459.2 825.4,459.2 829.1,459.4 832.8,459.7 836.4,460.2 840.1,460.9 843.8,462 847.5,463.2 851.2,464.5 854.8,465.9 858.5,467.4 862.2,469 865.9,470.8 869.6,473 873.2,475.5 876.9,478 880.6,480.9 884.3,484.3 888,488 891.7,491.7 895.3,495.3 899,499 902.7,502.7 906.4,506.4 910.1,509.9 913.7,513.3 917.4,516.5 921.1,519.7 924.8,522.9 928.5,526 932.1,528.8 935.8,531.4 939.5,533.8 943.2,536.2 946.9,538.3 950.5,540.3 954.2,542.1 957.9,544 961.6,545.8 965.3,547.6 969,549.5 972.6,551.3 976.3,553.2 980,554.6 983.7,555.7 987.4,556.5 991,557.2 994.7,557.9 998.4,558.7 1002.1,559.4 1005.8,560.1 1009.4,560.7 1013.1,561.3 1016.8,561.9 1020.5,562.5 1024.2,563.1 1027.8,563.5 1031.5,563.6 1035.2,563.4 1038.9,562.9 1042.6,562.6 1046.3,562.5 1049.9,562.5 1053.6,562.5 1057.3,562.5 1061,562.5 1064.7,562.5 1068.3,562.5 1072,562.5 1075.7,562.5 1079.4,562.5 1083.1,562.5 1086.7,562.5 1090.4,562.5 1094.1,562.6 1097.8,562.8 1101.5,563.1 1105.1,563.5 1108.8,563.7 1112.5,563.5 1116.2,563.1 1119.9,562.1 1123.6,560.7 1127.2,558.9 1130.9,557 1134.6,555.2 1138.3,553.5 1142,552 1145.6,550.8 1149.3,549.7 1153,548.6 1156.7,547.5 1160.4,546.4 1164,545.6 1167.7,545.1 1171.4,545 1175.1,545.1 1178.8,545.6 1182.5,546.3 1186.1,547.3 1189.8,548.3 1193.5,549.3 1197.2,550.2 1200.9,551 1204.5,551.7 1208.2,552.2 1211.9,552.8 1215.6,553.3 1219.3,553.4 1222.9,552.9 1226.6,551.9 1230.3,550.8 1234,550.1 1237.7,549.7 1241.3,549.4 1245,549.2 1248.7,548.9 1252.4,548.7 1256.1,548.4 1259.8,548.2 1263.4,547.9 1267.1,547.7 1270.8,547.4 1274.5,547.1 1278.2,546.7 1281.8,546.3 1285.5,545.9 1289.2,545.6 1292.9,545.2 1296.6,544.8 1300.2,544.5 1303.9,544.1 1307.6,543.8 1311.3,543.6 1315,543.5 1318.6,543.3 1322.3,543.2 1326,543 1329.7,542.9 1333.4,542.8 1337.1,542.7 1340.7,543 1344.4,543.6 1348.1,544.6 1351.8,545.6 1355.5,546.5 1359.1,547.5 1362.8,548.4 1366.5,549.1"/>
<polyline fill="none" stroke="#7d00c4" stroke-width="1.3" stroke-dasharray="10,10" points="0.8,147.8 4.5,147.5 8.2,147.5 11.9,147.9 15.6,148.7 19.3,149.5 22.9,150.1 26.6,150.6 30.3,150.9 34,151.1 37.7,151.3 41.3,151.5 45,151.8 48.7,152 52.4,152.3 56.1,152.6 59.7,152.9 63.4,153 67.1,153 70.8,153 74.5,153 78.2,153 81.8,153.1 85.5,153.3 89.2,153.6 92.9,154 96.6,154.5 100.2,155.2 103.9,156.2 107.6,157.1 111.3,158 115,158.9 118.6,159.8 122.3,160.8 126,161.9 129.7,163.1 133.4,164.2 137,165.3 140.7,166.4 144.4,167.4 148.1,168.5 151.8,169.6 155.5,170.8 159.1,172 162.8,173.3 166.5,174.7 170.2,176.3 173.9,177.9 177.5,179.5 181.2,181.1 184.9,182.8 188.6,184.5 192.3,186.4 195.9,188.6 199.6,190.8 203.3,193 207,195.2 210.7,197.3 214.3,199.3 218,201.2 221.7,203.1 225.4,205 229.1,206.9 232.8,209 236.4,211.4 240.1,214.3 243.8,217.3 247.5,220.4 251.2,223.2 254.8,226 258.5,228.6 262.2,231.2 265.9,233.8 269.6,236.2 273.2,238.6 276.9,240.9 280.6,243.2 284.3,245.5 288,247.7 291.6,249.8 295.3,251.8 299,253.9 302.7,255.9 306.4,258 310.1,260 313.7,261.9 317.4,263.7 321.1,265.5 324.8,267.4 328.5,269.2 332.1,271.1 335.8,272.9 339.5,274.8 343.2,276.6 346.9,278.4 350.5,280.1 354.2,281.7 357.9,283.2 361.6,284.6 365.3,286.3 368.9,288.2 372.6,290.2 376.3,292.2 380,294.2 383.7,296.3 387.4,298.3 391,300.3 394.7,302.4 398.4,304.6 402.1,306.9 405.8,309.2 409.4,311.5 413.1,313.8 416.8,315.8 420.5,317.7 424.2,319.6 427.8,321.4 431.5,323.3 435.2,325.1 438.9,326.8 442.6,328.4 446.2,329.9 449.9,331.3 453.6,332.7 457.3,334.1 461,335.5 464.7,337.1 468.3,339 472,341.2 475.7,343.4 479.4,345.6 483.1,347.8 486.7,350 490.4,352 494.1,353.6 497.8,355.1 501.5,356.6 505.1,358.1 508.8,359.5 512.5,361 516.2,362.5 519.9,363.7 523.6,364.5 527.2,365.1 530.9,365.6 534.6,366.2 538.3,366.6 542,366.8 545.6,366.7 549.3,366.5 553,366.3 556.7,366.1 560.4,365.9 564,365.7 567.7,365.5 571.4,365.3 575.1,365.3 578.8,365.7 582.4,366.6 586.1,367.8 589.8,368.8 593.5,369.5 597.2,370.1 600.9,370.7 604.5,371.3 608.2,371.9 611.9,372.5 615.6,373.3 619.3,374.4 622.9,375.5 626.6,376.7 630.3,377.9 634,379.1 637.7,380.2 641.3,381.2 645,382 648.7,382.7 652.4,383.5 656.1,384.2 659.7,384.9 663.4,385.7 667.1,386.4 670.8,387.2 674.5,387.9 678.2,388.6 681.8,389.4 685.5,390.1 689.2,391 692.9,392 696.6,393.1 700.2,394.3 703.9,395.5 707.6,396.7 711.3,397.8 715,398.7 718.6,399.7 722.3,400.6 726,401.5 729.7,402.2 733.4,402.8 737,403.1 740.7,403.4 744.4,403.7 748.1,404 751.8,404.3 755.5,404.6 759.1,405 762.8,405.4 766.5,405.9 770.2,406.4 773.9,406.8 777.5,407.3 781.2,407.8 784.9,408.3 788.6,408.7 792.3,408.9 795.9,409 799.6,409 803.3,409 807,409 810.7,409 814.4,409 818,409 821.7,409 825.4,409 829.1,409.1 832.8,409.3 836.4,409.6 840.1,409.9 843.8,410.2 847.5,410.8 851.2,411.7 854.8,413 858.5,414.2 862.2,415.5 865.9,416.8 869.6,418 873.2,419.5 876.9,421 880.6,422.7 884.3,424.4 888,426.1 891.7,427.8 895.3,429.5 899,431.2 902.7,432.9 906.4,434.6 910.1,436.2 913.7,437.8 917.4,439.5 921.1,441.1 924.8,442.7 928.5,444.2 932.1,445.5 935.8,446.6 939.5,447.6 943.2,448.6 946.9,449.6 950.5,450.7 954.2,451.7 957.9,452.7 961.6,453.7 965.3,454.7 969,455.8 972.6,457 976.3,458.3 980,459.7 983.7,461.1 987.4,462.4 991,463.8 994.7,465.2 998.4,466.5 1002.1,467.9 1005.8,469.1 1009.4,470.1 1013.1,470.9 1016.8,471.8 1020.5,472.7 1024.2,473.6 1027.8,474.4 1031.5,475.2 1035.2,475.8 1038.9,476.4 1042.6,477 1046.3,477.6 1049.9,478.2 1053.6,478.8 1057.3,479.5 1061,480.2 1064.7,480.9 1068.3,481.7 1072,482.4 1075.7,483.1 1079.4,483.9 1083.1,484.6 1086.7,485.3 1090.4,486.1 1094.1,486.9 1097.8,487.9 1101.5,489 1105.1,490.2 1108.8,491.3 1112.5,492.4 1116.2,493.5 1119.9,494.4 1123.6,495.2 1127.2,495.9 1130.9,496.7 1134.6,497.4 1138.3,498 1142,498.5 1145.6,499 1149.3,499.5 1153,499.9 1156.7,500.2 1160.4,500.3 1164,500.5 1167.7,500.7 1171.4,500.8 1175.1,500.8 1178.8,500.5 1182.5,500 1186.1,499.4 1189.8,498.9 1193.5,498.4 1197.2,497.9 1200.9,497.2 1204.5,496.4 1208.2,495.4 1211.9,494.5 1215.6,493.6 1219.3,492.6 1222.9,491.6 1226.6,490.5 1230.3,489.4 1234,488.3 1237.7,487.2 1241.3,486.1 1245,485.1 1248.7,484.1 1252.4,483.2 1256.1,482.3 1259.8,481.5 1263.4,480.6 1267.1,479.7 1270.8,478.6 1274.5,477.4 1278.2,476.1 1281.8,474.7 1285.5,473.4 1289.2,472.1 1292.9,470.8 1296.6,469.4 1300.2,468 1303.9,466.7 1307.6,465.3 1311.3,463.9 1315,462.4 1318.6,460.7 1322.3,458.8 1326,457 1329.7,455.2 1333.4,453.3 1337.1,451.5 1340.7,449.6 1344.4,447.8 1348.1,446 1351.8,444.1 1355.5,442.3 1359.1,440.6 1362.8,439 1366.5,438.1"/>
<line x1="1" y1="123.5" x2="239" y2="123.5" stroke="#ff1818" stroke-width="3" stroke-dasharray="14,14"/>
<rect x="1" y="153" width="1" height="14" fill="#fff"/>
<rect x="0" y="162" width="3" height="4" fill="#fff"/>
<rect x="1" y="163" width="1" height="2" fill="#80ff80"/>
<rect x="5" y="153" width="1" height="12" fill="#fff"/>
<rect x="4" y="159" width="3" height="4" fill="#fff"/>
<rect x="5" y="160" width="1" height="2" fill="#80ff80"/>
<rect x="8" y="156" width="1" height="14" fill="#fff"/>
<rect x="7" y="159" width="3" height="7" fill="#fff"/>
<rect x="8" y="160" width="1" height="5" fill="#ff2020"/>
<rect x="12" y="160" width="1" height="11" fill="#fff"/>
<rect x="11" y="165" width="3" height="5" fill="#fff"/>
<rect x="12" y="166" width="1" height="3" fill="#ff2020"/>
<rect x="16" y="167" width="1" height="16" fill="#fff"/>
<rect x="15" y="169" width="3" height="13" fill="#fff"/>
<rect x="16" y="170" width="1" height="11" fill="#ff2020"/>
<rect x="19" y="171" width="1" height="14" fill="#fff"/>
<rect x="18" y="181" width="3" height="4" fill="#fff"/>
<rect x="19" y="182" width="1" height="2" fill="#ff2020"/>
<rect x="23" y="174" width="1" height="17" fill="#fff"/>
<rect x="22" y="184" width="3" height="6" fill="#fff"/>
<rect x="23" y="185" width="1" height="4" fill="#ff2020"/>
<rect x="27" y="182" width="1" height="13" fill="#fff"/>
<rect x="26" y="189" width="3" height="7" fill="#fff"/>
<rect x="27" y="190" width="1" height="5" fill="#ff2020"/>
<rect x="30" y="191" width="1" height="7" fill="#fff"/>
<rect x="29" y="194" width="3" height="2" fill="#fff"/>
<rect x="34" y="180" width="1" height="27" fill="#fff"/>
<rect x="33" y="180" width="3" height="15" fill="#fff"/>
<rect x="34" y="181" width="1" height="13" fill="#80ff80"/>
<rect x="38" y="170" width="1" height="12" fill="#fff"/>
<rect x="37" y="174" width="3" height="7" fill="#fff"/>
<rect x="38" y="175" width="1" height="5" fill="#80ff80"/>
<rect x="41" y="164" width="1" height="14" fill="#fff"/>
<rect x="40" y="171" width="3" height="4" fill="#fff"/>
<rect x="41" y="172" width="1" height="2" fill="#80ff80"/>
<rect x="45" y="163" width="1" height="17" fill="#fff"/>
<rect x="44" y="171" width="3" height="2" fill="#fff"/>
<rect x="49" y="162" width="1" height="24" fill="#fff"/>
<rect x="48" y="167" width="3" height="6" fill="#fff"/>
<rect x="49" y="168" width="1" height="4" fill="#80ff80"/>
<rect x="52" y="158" width="1" height="13" fill="#fff"/>
<rect x="51" y="159" width="3" height="9" fill="#fff"/>
<rect x="52" y="160" width="1" height="7" fill="#80ff80"/>
<rect x="56" y="155" width="1" height="5" fill="#fff"/>
<rect x="55" y="155" width="3" height="5" fill="#fff"/>
<rect x="56" y="156" width="1" height="3" fill="#80ff80"/>
<rect x="60" y="153" width="1" height="8" fill="#fff"/>
<rect x="59" y="155" width="3" height="6" fill="#fff"/>
<rect x="60" y="156" width="1" height="4" fill="#ff2020"/>
<rect x="63" y="156" width="1" height="14" fill="#fff"/>
<rect x="62" y="160" width="3" height="5" fill="#fff"/>
<rect x="63" y="161" width="1" height="3" fill="#ff2020"/>
<rect x="67" y="149" width="1" height="18" fill="#fff"/>
<rect x="66" y="154" width="3" height="11" fill="#fff"/>
<rect x="67" y="155" width="1" height="9" fill="#80ff80"/>
<rect x="71" y="150" width="1" height="4" fill="#fff"/>
<rect x="70" y="150" width="3" height="5" fill="#fff"/>
<rect x="71" y="151" width="1" height="3" fill="#80ff80"/>
<rect x="74" y="141" width="1" height="23" fill="#fff"/>
<rect x="73" y="150" width="3" height="9" fill="#fff"/>
<rect x="74" y="151" width="1" height="7" fill="#ff2020"/>
<rect x="78" y="156" width="1" height="4" fill="#fff"/>
<rect x="77" y="156" width="3" height="3" fill="#fff"/>
<rect x="82" y="155" width="1" height="5" fill="#fff"/>
<rect x="81" y="156" width="3" height="2" fill="#fff"/>
<rect x="86" y="156" width="1" height="18" fill="#fff"/>
<rect x="85" y="157" width="3" height="16" fill="#fff"/>
<rect x="86" y="158" width="1" height="14" fill="#ff2020"/>
<rect x="89" y="167" width="1" height="29" fill="#fff"/>
<rect x="88" y="172" width="3" height="23" fill="#fff"/>
<rect x="89" y="173" width="1" height="21" fill="#ff2020"/>
<rect x="93" y="193" width="1" height="29" fill="#fff"/>
<rect x="92" y="194" width="3" height="15" fill="#fff"/>
<rect x="93" y="195" width="1" height="13" fill="#ff2020"/>
<rect x="97" y="198" width="1" height="37" fill="#fff"/>
<rect x="96" y="208" width="3" height="16" fill="#fff"/>
<rect x="97" y="209" width="1" height="14" fill="#ff2020"/>
<rect x="100" y="202" width="1" height="21" fill="#fff"/>
<rect x="99" y="222" width="3" height="2" fill="#fff"/>
<rect x="104" y="181" width="1" height="58" fill="#fff"/>
<rect x="103" y="222" width="3" height="9" fill="#fff"/>
<rect x="104" y="223" width="1" height="7" fill="#ff2020"/>
<rect x="108" y="228" width="1" height="15" fill="#fff"/>
<rect x="107" y="230" width="3" height="6" fill="#fff"/>
<rect x="108" y="231" width="1" height="4" fill="#ff2020"/>
<rect x="111" y="232" width="1" height="29" fill="#fff"/>
<rect x="110" y="235" width="3" height="23" fill="#fff"/>
<rect x="111" y="236" width="1" height="21" fill="#ff2020"/>
<rect x="115" y="247" width="1" height="26" fill="#fff"/>
<rect x="114" y="257" width="3" height="3" fill="#fff"/>
<rect x="119" y="257" width="1" height="3" fill="#fff"/>
<rect x="118" y="259" width="3" height="2" fill="#fff"/>
<rect x="122" y="252" width="1" height="12" fill="#fff"/>
<rect x="121" y="253" width="3" height="7" fill="#fff"/>
<rect x="122" y="254" width="1" height="5" fill="#80ff80"/>
<rect x="126" y="231" width="1" height="32" fill="#fff"/>
<rect x="125" y="240" width="3" height="14" fill="#fff"/>
<rect x="126" y="241" width="1" height="12" fill="#80ff80"/>
<rect x="130" y="205" width="1" height="37" fill="#fff"/>
<rect x="129" y="224" width="3" height="17" fill="#fff"/>
<rect x="130" y="225" width="1" height="15" fill="#80ff80"/>
<rect x="133" y="210" width="1" height="18" fill="#fff"/>
<rect x="132" y="222" width="3" height="3" fill="#fff"/>
<rect x="137" y="217" width="1" height="21" fill="#fff"/>
<rect x="136" y="222" width="3" height="8" fill="#fff"/>
<rect x="137" y="223" width="1" height="6" fill="#ff2020"/>
<rect x="141" y="191" width="1" height="49" fill="#fff"/>
<rect x="140" y="204" width="3" height="26" fill="#fff"/>
<rect x="141" y="205" width="1" height="24" fill="#80ff80"/>
<rect x="144" y="181" width="1" height="53" fill="#fff"/>
<rect x="143" y="204" width="3" height="28" fill="#fff"/>
<rect x="144" y="205" width="1" height="26" fill="#ff2020"/>
<rect x="148" y="221" width="1" height="11" fill="#fff"/>
<rect x="147" y="223" width="3" height="9" fill="#fff"/>
<rect x="148" y="224" width="1" height="7" fill="#80ff80"/>
<rect x="152" y="209" width="1" height="36" fill="#fff"/>
<rect x="151" y="217" width="3" height="7" fill="#fff"/>
<rect x="152" y="218" width="1" height="5" fill="#80ff80"/>
<rect x="155" y="196" width="1" height="34" fill="#fff"/>
<rect x="154" y="217" width="3" height="9" fill="#fff"/>
<rect x="155" y="218" width="1" height="7" fill="#ff2020"/>
<rect x="159" y="215" width="1" height="20" fill="#fff"/>
<rect x="158" y="225" width="3" height="7" fill="#fff"/>
<rect x="159" y="226" width="1" height="5" fill="#ff2020"/>
<rect x="163" y="228" width="1" height="32" fill="#fff"/>
<rect x="162" y="231" width="3" height="17" fill="#fff"/>
<rect x="163" y="232" width="1" height="15" fill="#ff2020"/>
<rect x="166" y="242" width="1" height="15" fill="#fff"/>
<rect x="165" y="244" width="3" height="4" fill="#fff"/>
<rect x="166" y="245" width="1" height="2" fill="#80ff80"/>
<rect x="170" y="240" width="1" height="56" fill="#fff"/>
<rect x="169" y="244" width="3" height="39" fill="#fff"/>
<rect x="170" y="245" width="1" height="37" fill="#ff2020"/>
<rect x="174" y="282" width="1" height="19" fill="#fff"/>
<rect x="173" y="282" width="3" height="13" fill="#fff"/>
<rect x="174" y="283" width="1" height="11" fill="#ff2020"/>
<rect x="178" y="293" width="1" height="6" fill="#fff"/>
<rect x="177" y="294" width="3" height="2" fill="#fff"/>
<rect x="181" y="293" width="1" height="10" fill="#fff"/>
<rect x="180" y="294" width="3" height="7" fill="#fff"/>
<rect x="181" y="295" width="1" height="5" fill="#ff2020"/>
<rect x="185" y="289" width="1" height="14" fill="#fff"/>
<rect x="184" y="300" width="3" height="2" fill="#fff"/>
<rect x="189" y="296" width="1" height="21" fill="#fff"/>
<rect x="188" y="301" width="3" height="5" fill="#fff"/>
<rect x="189" y="302" width="1" height="3" fill="#ff2020"/>
<rect x="192" y="298" width="1" height="16" fill="#fff"/>
<rect x="191" y="305" width="3" height="8" fill="#fff"/>
<rect x="192" y="306" width="1" height="6" fill="#ff2020"/>
<rect x="196" y="302" width="1" height="37" fill="#fff"/>
<rect x="195" y="309" width="3" height="4" fill="#fff"/>
<rect x="196" y="310" width="1" height="2" fill="#80ff80"/>
<rect x="200" y="297" width="1" height="26" fill="#fff"/>
<rect x="199" y="308" width="3" height="2" fill="#fff"/>
<rect x="203" y="298" width="1" height="16" fill="#fff"/>
<rect x="202" y="306" width="3" height="3" fill="#fff"/>
<rect x="207" y="304" width="1" height="26" fill="#fff"/>
<rect x="206" y="306" width="3" height="16" fill="#fff"/>
<rect x="207" y="307" width="1" height="14" fill="#ff2020"/>
<rect x="211" y="302" width="1" height="29" fill="#fff"/>
<rect x="210" y="311" width="3" height="11" fill="#fff"/>
<rect x="211" y="312" width="1" height="9" fill="#80ff80"/>
<rect x="214" y="304" width="1" height="8" fill="#fff"/>
<rect x="213" y="309" width="3" height="3" fill="#fff"/>
<rect x="218" y="304" width="1" height="32" fill="#fff"/>
<rect x="217" y="309" width="3" height="23" fill="#fff"/>
<rect x="218" y="310" width="1" height="21" fill="#ff2020"/>
<rect x="222" y="320" width="1" height="35" fill="#fff"/>
<rect x="221" y="331" width="3" height="21" fill="#fff"/>
<rect x="222" y="332" width="1" height="19" fill="#ff2020"/>
<rect x="225" y="349" width="1" height="32" fill="#fff"/>
<rect x="224" y="351" width="3" height="28" fill="#fff"/>
<rect x="225" y="352" width="1" height="26" fill="#ff2020"/>
<rect x="229" y="361" width="1" height="19" fill="#fff"/>
<rect x="228" y="367" width="3" height="12" fill="#fff"/>
<rect x="229" y="368" width="1" height="10" fill="#80ff80"/>
<rect x="233" y="356" width="1" height="20" fill="#fff"/>
<rect x="232" y="367" width="3" height="9" fill="#fff"/>
<rect x="233" y="368" width="1" height="7" fill="#ff2020"/>
<rect x="236" y="357" width="1" height="42" fill="#fff"/>
<rect x="235" y="375" width="3" height="18" fill="#fff"/>
<rect x="236" y="376" width="1" height="16" fill="#ff2020"/>
<rect x="240" y="371" width="1" height="25" fill="#fff"/>
<rect x="239" y="373" width="3" height="20" fill="#fff"/>
<rect x="240" y="374" width="1" height="18" fill="#80ff80"/>
<rect x="244" y="367" width="1" height="12" fill="#fff"/>
<rect x="243" y="368" width="3" height="6" fill="#fff"/>
<rect x="244" y="369" width="1" height="4" fill="#80ff80"/>
<rect x="247" y="356" width="1" height="28" fill="#fff"/>
<rect x="246" y="368" width="3" height="15" fill="#fff"/>
<rect x="247" y="369" width="1" height="13" fill="#ff2020"/>
<rect x="251" y="372" width="1" height="12" fill="#fff"/>
<rect x="250" y="375" width="3" height="8" fill="#fff"/>
<rect x="251" y="376" width="1" height="6" fill="#80ff80"/>
<rect x="255" y="367" width="1" height="17" fill="#fff"/>
<rect x="254" y="375" width="3" height="2" fill="#fff"/>
<rect x="259" y="367" width="1" height="14" fill="#fff"/>
<rect x="258" y="371" width="3" height="6" fill="#fff"/>
<rect x="259" y="372" width="1" height="4" fill="#80ff80"/>
<rect x="262" y="355" width="1" height="16" fill="#fff"/>
<rect x="261" y="363" width="3" height="9" fill="#fff"/>
<rect x="262" y="364" width="1" height="7" fill="#80ff80"/>
<rect x="266" y="351" width="1" height="17" fill="#fff"/>
<rect x="265" y="358" width="3" height="6" fill="#fff"/>
<rect x="266" y="359" width="1" height="4" fill="#80ff80"/>
<rect x="270" y="349" width="1" height="24" fill="#fff"/>
<rect x="269" y="358" width="3" height="13" fill="#fff"/>
<rect x="270" y="359" width="1" height="11" fill="#ff2020"/>
<rect x="273" y="363" width="1" height="26" fill="#fff"/>
<rect x="272" y="370" width="3" height="19" fill="#fff"/>
<rect x="273" y="371" width="1" height="17" fill="#ff2020"/>
<rect x="277" y="381" width="1" height="10" fill="#fff"/>
<rect x="276" y="383" width="3" height="6" fill="#fff"/>
<rect x="277" y="384" width="1" height="4" fill="#80ff80"/>
<rect x="281" y="361" width="1" height="42" fill="#fff"/>
<rect x="280" y="371" width="3" height="13" fill="#fff"/>
<rect x="281" y="372" width="1" height="11" fill="#80ff80"/>
<rect x="284" y="340" width="1" height="38" fill="#fff"/>
<rect x="283" y="344" width="3" height="28" fill="#fff"/>
<rect x="284" y="345" width="1" height="26" fill="#80ff80"/>
<rect x="288" y="307" width="1" height="39" fill="#fff"/>
<rect x="287" y="312" width="3" height="33" fill="#fff"/>
<rect x="288" y="313" width="1" height="31" fill="#80ff80"/>
<rect x="292" y="302" width="1" height="19" fill="#fff"/>
<rect x="291" y="306" width="3" height="7" fill="#fff"/>
<rect x="292" y="307" width="1" height="5" fill="#80ff80"/>
<rect x="295" y="305" width="1" height="18" fill="#fff"/>
<rect x="294" y="306" width="3" height="13" fill="#fff"/>
<rect x="295" y="307" width="1" height="11" fill="#ff2020"/>
<rect x="299" y="302" width="1" height="23" fill="#fff"/>
<rect x="298" y="309" width="3" height="10" fill="#fff"/>
<rect x="299" y="310" width="1" height="8" fill="#80ff80"/>
<rect x="303" y="295" width="1" height="24" fill="#fff"/>
<rect x="302" y="306" width="3" height="4" fill="#fff"/>
<rect x="303" y="307" width="1" height="2" fill="#80ff80"/>
<rect x="306" y="304" width="1" height="24" fill="#fff"/>
<rect x="305" y="306" width="3" height="7" fill="#fff"/>
<rect x="306" y="307" width="1" height="5" fill="#ff2020"/>
<rect x="310" y="307" width="1" height="8" fill="#fff"/>
<rect x="309" y="310" width="3" height="3" fill="#fff"/>
<rect x="314" y="306" width="1" height="13" fill="#fff"/>
<rect x="313" y="310" width="3" height="8" fill="#fff"/>
<rect x="314" y="311" width="1" height="6" fill="#ff2020"/>
<rect x="317" y="309" width="1" height="26" fill="#fff"/>
<rect x="316" y="317" width="3" height="7" fill="#fff"/>
<rect x="317" y="318" width="1" height="5" fill="#ff2020"/>
<rect x="321" y="312" width="1" height="19" fill="#fff"/>
<rect x="320" y="323" width="3" height="4" fill="#fff"/>
<rect x="321" y="324" width="1" height="2" fill="#ff2020"/>
<rect x="325" y="317" width="1" height="15" fill="#fff"/>
<rect x="324" y="326" width="3" height="2" fill="#fff"/>
<rect x="328" y="321" width="1" height="28" fill="#fff"/>
<rect x="327" y="326" width="3" height="22" fill="#fff"/>
<rect x="328" y="327" width="1" height="20" fill="#ff2020"/>
<rect x="332" y="304" width="1" height="48" fill="#fff"/>
<rect x="331" y="307" width="3" height="41" fill="#fff"/>
<rect x="332" y="308" width="1" height="39" fill="#80ff80"/>
<rect x="336" y="291" width="1" height="20" fill="#fff"/>
<rect x="335" y="307" width="3" height="3" fill="#fff"/>
<rect x="340" y="307" width="1" height="28" fill="#fff"/>
<rect x="339" y="309" width="3" height="18" fill="#fff"/>
<rect x="340" y="310" width="1" height="16" fill="#ff2020"/>
<rect x="343" y="314" width="1" height="33" fill="#fff"/>
<rect x="342" y="318" width="3" height="9" fill="#fff"/>
<rect x="343" y="319" width="1" height="7" fill="#80ff80"/>
<rect x="347" y="305" width="1" height="45" fill="#fff"/>
<rect x="346" y="318" width="3" height="21" fill="#fff"/>
<rect x="347" y="319" width="1" height="19" fill="#ff2020"/>
<rect x="351" y="330" width="1" height="51" fill="#fff"/>
<rect x="350" y="338" width="3" height="30" fill="#fff"/>
<rect x="351" y="339" width="1" height="28" fill="#ff2020"/>
<rect x="354" y="358" width="1" height="20" fill="#fff"/>
<rect x="353" y="367" width="3" height="8" fill="#fff"/>
<rect x="354" y="368" width="1" height="6" fill="#ff2020"/>
<rect x="358" y="362" width="1" height="13" fill="#fff"/>
<rect x="357" y="365" width="3" height="10" fill="#fff"/>
<rect x="358" y="366" width="1" height="8" fill="#80ff80"/>
<rect x="362" y="361" width="1" height="8" fill="#fff"/>
<rect x="361" y="363" width="3" height="3" fill="#fff"/>
<rect x="365" y="346" width="1" height="28" fill="#fff"/>
<rect x="364" y="347" width="3" height="17" fill="#fff"/>
<rect x="365" y="348" width="1" height="15" fill="#80ff80"/>
<rect x="369" y="309" width="1" height="41" fill="#fff"/>
<rect x="368" y="310" width="3" height="38" fill="#fff"/>
<rect x="369" y="311" width="1" height="36" fill="#80ff80"/>
<rect x="373" y="254" width="1" height="62" fill="#fff"/>
<rect x="372" y="258" width="3" height="53" fill="#fff"/>
<rect x="373" y="259" width="1" height="51" fill="#80ff80"/>
<rect x="376" y="247" width="1" height="20" fill="#fff"/>
<rect x="375" y="258" width="3" height="2" fill="#fff"/>
<rect x="380" y="256" width="1" height="59" fill="#fff"/>
<rect x="379" y="258" width="3" height="52" fill="#fff"/>
<rect x="380" y="259" width="1" height="50" fill="#ff2020"/>
<rect x="384" y="292" width="1" height="28" fill="#fff"/>
<rect x="383" y="309" width="3" height="5" fill="#fff"/>
<rect x="384" y="310" width="1" height="3" fill="#ff2020"/>
<rect x="387" y="291" width="1" height="26" fill="#fff"/>
<rect x="386" y="307" width="3" height="7" fill="#fff"/>
<rect x="387" y="308" width="1" height="5" fill="#80ff80"/>
<rect x="391" y="286" width="1" height="35" fill="#fff"/>
<rect x="390" y="307" width="3" height="11" fill="#fff"/>
<rect x="391" y="308" width="1" height="9" fill="#ff2020"/>
<rect x="395" y="307" width="1" height="70" fill="#fff"/>
<rect x="394" y="317" width="3" height="47" fill="#fff"/>
<rect x="395" y="318" width="1" height="45" fill="#ff2020"/>
<rect x="398" y="358" width="1" height="38" fill="#fff"/>
<rect x="397" y="363" width="3" height="16" fill="#fff"/>
<rect x="398" y="364" width="1" height="14" fill="#ff2020"/>
<rect x="402" y="374" width="1" height="13" fill="#fff"/>
<rect x="401" y="378" width="3" height="8" fill="#fff"/>
<rect x="402" y="379" width="1" height="6" fill="#ff2020"/>
<rect x="406" y="365" width="1" height="69" fill="#fff"/>
<rect x="405" y="385" width="3" height="40" fill="#fff"/>
<rect x="406" y="386" width="1" height="38" fill="#ff2020"/>
<rect x="409" y="385" width="1" height="48" fill="#fff"/>
<rect x="408" y="399" width="3" height="26" fill="#fff"/>
<rect x="409" y="400" width="1" height="24" fill="#80ff80"/>
<rect x="413" y="394" width="1" height="11" fill="#fff"/>
<rect x="412" y="399" width="3" height="3" fill="#fff"/>
<rect x="417" y="400" width="1" height="30" fill="#fff"/>
<rect x="416" y="401" width="3" height="15" fill="#fff"/>
<rect x="417" y="402" width="1" height="13" fill="#ff2020"/>
<rect x="420" y="388" width="1" height="28" fill="#fff"/>
<rect x="419" y="397" width="3" height="19" fill="#fff"/>
<rect x="420" y="398" width="1" height="17" fill="#80ff80"/>
<rect x="424" y="393" width="1" height="13" fill="#fff"/>
<rect x="423" y="397" width="3" height="3" fill="#fff"/>
<rect x="428" y="391" width="1" height="13" fill="#fff"/>
<rect x="427" y="391" width="3" height="9" fill="#fff"/>
<rect x="428" y="392" width="1" height="7" fill="#80ff80"/>
<rect x="432" y="374" width="1" height="20" fill="#fff"/>
<rect x="431" y="378" width="3" height="14" fill="#fff"/>
<rect x="432" y="379" width="1" height="12" fill="#80ff80"/>
<rect x="435" y="363" width="1" height="19" fill="#fff"/>
<rect x="434" y="370" width="3" height="9" fill="#fff"/>
<rect x="435" y="371" width="1" height="7" fill="#80ff80"/>
<rect x="439" y="364" width="1" height="7" fill="#fff"/>
<rect x="438" y="365" width="3" height="6" fill="#fff"/>
<rect x="439" y="366" width="1" height="4" fill="#80ff80"/>
<rect x="443" y="353" width="1" height="22" fill="#fff"/>
<rect x="442" y="358" width="3" height="8" fill="#fff"/>
<rect x="443" y="359" width="1" height="6" fill="#80ff80"/>
<rect x="446" y="331" width="1" height="48" fill="#fff"/>
<rect x="445" y="358" width="3" height="19" fill="#fff"/>
<rect x="446" y="359" width="1" height="17" fill="#ff2020"/>
<rect x="450" y="369" width="1" height="8" fill="#fff"/>
<rect x="449" y="373" width="3" height="4" fill="#fff"/>
<rect x="450" y="374" width="1" height="2" fill="#80ff80"/>
<rect x="454" y="366" width="1" height="51" fill="#fff"/>
<rect x="453" y="373" width="3" height="21" fill="#fff"/>
<rect x="454" y="374" width="1" height="19" fill="#ff2020"/>
<rect x="457" y="369" width="1" height="37" fill="#fff"/>
<rect x="456" y="376" width="3" height="18" fill="#fff"/>
<rect x="457" y="377" width="1" height="16" fill="#80ff80"/>
<rect x="461" y="360" width="1" height="38" fill="#fff"/>
<rect x="460" y="376" width="3" height="17" fill="#fff"/>
<rect x="461" y="377" width="1" height="15" fill="#ff2020"/>
<rect x="465" y="391" width="1" height="11" fill="#fff"/>
<rect x="464" y="392" width="3" height="8" fill="#fff"/>
<rect x="465" y="393" width="1" height="6" fill="#ff2020"/>
<rect x="468" y="392" width="1" height="25" fill="#fff"/>
<rect x="467" y="399" width="3" height="15" fill="#fff"/>
<rect x="468" y="400" width="1" height="13" fill="#ff2020"/>
<rect x="472" y="408" width="1" height="33" fill="#fff"/>
<rect x="471" y="413" width="3" height="24" fill="#fff"/>
<rect x="472" y="414" width="1" height="22" fill="#ff2020"/>
<rect x="476" y="423" width="1" height="27" fill="#fff"/>
<rect x="475" y="436" width="3" height="2" fill="#fff"/>
<rect x="479" y="409" width="1" height="34" fill="#fff"/>
<rect x="478" y="425" width="3" height="12" fill="#fff"/>
<rect x="479" y="426" width="1" height="10" fill="#80ff80"/>
<rect x="483" y="420" width="1" height="8" fill="#fff"/>
<rect x="482" y="425" width="3" height="2" fill="#fff"/>
<rect x="487" y="417" width="1" height="29" fill="#fff"/>
<rect x="486" y="425" width="3" height="4" fill="#fff"/>
<rect x="487" y="426" width="1" height="2" fill="#ff2020"/>
<rect x="490" y="421" width="1" height="13" fill="#fff"/>
<rect x="489" y="422" width="3" height="7" fill="#fff"/>
<rect x="490" y="423" width="1" height="5" fill="#80ff80"/>
<rect x="494" y="418" width="1" height="47" fill="#fff"/>
<rect x="493" y="422" width="3" height="15" fill="#fff"/>
<rect x="494" y="423" width="1" height="13" fill="#ff2020"/>
<rect x="498" y="428" width="1" height="15" fill="#fff"/>
<rect x="497" y="436" width="3" height="4" fill="#fff"/>
<rect x="498" y="437" width="1" height="2" fill="#ff2020"/>
<rect x="501" y="419" width="1" height="26" fill="#fff"/>
<rect x="500" y="425" width="3" height="15" fill="#fff"/>
<rect x="501" y="426" width="1" height="13" fill="#80ff80"/>
<rect x="505" y="408" width="1" height="17" fill="#fff"/>
<rect x="504" y="414" width="3" height="12" fill="#fff"/>
<rect x="505" y="415" width="1" height="10" fill="#80ff80"/>
<rect x="509" y="398" width="1" height="29" fill="#fff"/>
<rect x="508" y="406" width="3" height="9" fill="#fff"/>
<rect x="509" y="407" width="1" height="7" fill="#80ff80"/>
<rect x="513" y="399" width="1" height="11" fill="#fff"/>
<rect x="512" y="403" width="3" height="4" fill="#fff"/>
<rect x="513" y="404" width="1" height="2" fill="#80ff80"/>
<rect x="516" y="381" width="1" height="27" fill="#fff"/>
<rect x="515" y="385" width="3" height="19" fill="#fff"/>
<rect x="516" y="386" width="1" height="17" fill="#80ff80"/>
<rect x="520" y="377" width="1" height="19" fill="#fff"/>
<rect x="519" y="385" width="3" height="9" fill="#fff"/>
<rect x="520" y="386" width="1" height="7" fill="#ff2020"/>
<rect x="524" y="375" width="1" height="18" fill="#fff"/>
<rect x="523" y="383" width="3" height="11" fill="#fff"/>
<rect x="524" y="384" width="1" height="9" fill="#80ff80"/>
<rect x="527" y="372" width="1" height="19" fill="#fff"/>
<rect x="526" y="373" width="3" height="11" fill="#fff"/>
<rect x="527" y="374" width="1" height="9" fill="#80ff80"/>
<rect x="531" y="343" width="1" height="37" fill="#fff"/>
<rect x="530" y="356" width="3" height="18" fill="#fff"/>
<rect x="531" y="357" width="1" height="16" fill="#80ff80"/>
<rect x="535" y="346" width="1" height="31" fill="#fff"/>
<rect x="534" y="355" width="3" height="2" fill="#fff"/>
<rect x="538" y="351" width="1" height="16" fill="#fff"/>
<rect x="537" y="355" width="3" height="3" fill="#fff"/>
<rect x="542" y="354" width="1" height="14" fill="#fff"/>
<rect x="541" y="355" width="3" height="3" fill="#fff"/>
<rect x="546" y="349" width="1" height="19" fill="#fff"/>
<rect x="545" y="355" width="3" height="13" fill="#fff"/>
<rect x="546" y="356" width="1" height="11" fill="#ff2020"/>
<rect x="549" y="347" width="1" height="25" fill="#fff"/>
<rect x="548" y="357" width="3" height="11" fill="#fff"/>
<rect x="549" y="358" width="1" height="9" fill="#80ff80"/>
<rect x="553" y="348" width="1" height="28" fill="#fff"/>
<rect x="552" y="357" width="3" height="11" fill="#fff"/>
<rect x="553" y="358" width="1" height="9" fill="#ff2020"/>
<rect x="557" y="356" width="1" height="32" fill="#fff"/>
<rect x="556" y="361" width="3" height="7" fill="#fff"/>
<rect x="557" y="362" width="1" height="5" fill="#80ff80"/>
<rect x="560" y="356" width="1" height="20" fill="#fff"/>
<rect x="559" y="361" width="3" height="12" fill="#fff"/>
<rect x="560" y="362" width="1" height="10" fill="#ff2020"/>
<rect x="564" y="355" width="1" height="28" fill="#fff"/>
<rect x="563" y="372" width="3" height="3" fill="#fff"/>
<rect x="568" y="352" width="1" height="23" fill="#fff"/>
<rect x="567" y="359" width="3" height="16" fill="#fff"/>
<rect x="568" y="360" width="1" height="14" fill="#80ff80"/>
<rect x="571" y="358" width="1" height="26" fill="#fff"/>
<rect x="570" y="359" width="3" height="15" fill="#fff"/>
<rect x="571" y="360" width="1" height="13" fill="#ff2020"/>
<rect x="575" y="365" width="1" height="18" fill="#fff"/>
<rect x="574" y="373" width="3" height="9" fill="#fff"/>
<rect x="575" y="374" width="1" height="7" fill="#ff2020"/>
<rect x="579" y="377" width="1" height="53" fill="#fff"/>
<rect x="578" y="381" width="3" height="25" fill="#fff"/>
<rect x="579" y="382" width="1" height="23" fill="#ff2020"/>
<rect x="582" y="403" width="1" height="57" fill="#fff"/>
<rect x="581" y="405" width="3" height="33" fill="#fff"/>
<rect x="582" y="406" width="1" height="31" fill="#ff2020"/>
<rect x="586" y="418" width="1" height="33" fill="#fff"/>
<rect x="585" y="420" width="3" height="18" fill="#fff"/>
<rect x="586" y="421" width="1" height="16" fill="#80ff80"/>
<rect x="590" y="405" width="1" height="40" fill="#fff"/>
<rect x="589" y="420" width="3" height="19" fill="#fff"/>
<rect x="590" y="421" width="1" height="17" fill="#ff2020"/>
<rect x="593" y="421" width="1" height="21" fill="#fff"/>
<rect x="592" y="424" width="3" height="15" fill="#fff"/>
<rect x="593" y="425" width="1" height="13" fill="#80ff80"/>
<rect x="597" y="399" width="1" height="25" fill="#fff"/>
<rect x="596" y="403" width="3" height="22" fill="#fff"/>
<rect x="597" y="404" width="1" height="20" fill="#80ff80"/>
<rect x="601" y="377" width="1" height="27" fill="#fff"/>
<rect x="600" y="378" width="3" height="26" fill="#fff"/>
<rect x="601" y="379" width="1" height="24" fill="#80ff80"/>
<rect x="605" y="375" width="1" height="19" fill="#fff"/>
<rect x="604" y="378" width="3" height="16" fill="#fff"/>
<rect x="605" y="379" width="1" height="14" fill="#ff2020"/>
<rect x="608" y="392" width="1" height="23" fill="#fff"/>
<rect x="607" y="393" width="3" height="21" fill="#fff"/>
<rect x="608" y="394" width="1" height="19" fill="#ff2020"/>
<rect x="612" y="406" width="1" height="37" fill="#fff"/>
<rect x="611" y="413" width="3" height="11" fill="#fff"/>
<rect x="612" y="414" width="1" height="9" fill="#ff2020"/>
<rect x="616" y="407" width="1" height="29" fill="#fff"/>
<rect x="615" y="423" width="3" height="10" fill="#fff"/>
<rect x="616" y="424" width="1" height="8" fill="#ff2020"/>
<rect x="619" y="425" width="1" height="11" fill="#fff"/>
<rect x="618" y="427" width="3" height="6" fill="#fff"/>
<rect x="619" y="428" width="1" height="4" fill="#80ff80"/>
<rect x="623" y="413" width="1" height="24" fill="#fff"/>
<rect x="622" y="427" width="3" height="5" fill="#fff"/>
<rect x="623" y="428" width="1" height="3" fill="#ff2020"/>
<rect x="627" y="407" width="1" height="27" fill="#fff"/>
<rect x="626" y="422" width="3" height="10" fill="#fff"/>
<rect x="627" y="423" width="1" height="8" fill="#80ff80"/>
<rect x="630" y="411" width="1" height="42" fill="#fff"/>
<rect x="629" y="422" width="3" height="13" fill="#fff"/>
<rect x="630" y="423" width="1" height="11" fill="#ff2020"/>
<rect x="634" y="409" width="1" height="27" fill="#fff"/>
<rect x="633" y="417" width="3" height="18" fill="#fff"/>
<rect x="634" y="418" width="1" height="16" fill="#80ff80"/>
<rect x="638" y="370" width="1" height="60" fill="#fff"/>
<rect x="637" y="403" width="3" height="15" fill="#fff"/>
<rect x="638" y="404" width="1" height="13" fill="#80ff80"/>
<rect x="641" y="397" width="1" height="8" fill="#fff"/>
<rect x="640" y="399" width="3" height="5" fill="#fff"/>
<rect x="641" y="400" width="1" height="3" fill="#80ff80"/>
<rect x="645" y="387" width="1" height="22" fill="#fff"/>
<rect x="644" y="399" width="3" height="10" fill="#fff"/>
<rect x="645" y="400" width="1" height="8" fill="#ff2020"/>
<rect x="649" y="385" width="1" height="26" fill="#fff"/>
<rect x="648" y="397" width="3" height="12" fill="#fff"/>
<rect x="649" y="398" width="1" height="10" fill="#80ff80"/>
<rect x="652" y="382" width="1" height="26" fill="#fff"/>
<rect x="651" y="389" width="3" height="9" fill="#fff"/>
<rect x="652" y="390" width="1" height="7" fill="#80ff80"/>
<rect x="656" y="369" width="1" height="25" fill="#fff"/>
<rect x="655" y="374" width="3" height="16" fill="#fff"/>
<rect x="656" y="375" width="1" height="14" fill="#80ff80"/>
<rect x="660" y="366" width="1" height="15" fill="#fff"/>
<rect x="659" y="374" width="3" height="5" fill="#fff"/>
<rect x="660" y="375" width="1" height="3" fill="#ff2020"/>
<rect x="663" y="374" width="1" height="11" fill="#fff"/>
<rect x="662" y="378" width="3" height="5" fill="#fff"/>
<rect x="663" y="379" width="1" height="3" fill="#ff2020"/>
<rect x="667" y="374" width="1" height="47" fill="#fff"/>
<rect x="666" y="382" width="3" height="32" fill="#fff"/>
<rect x="667" y="383" width="1" height="30" fill="#ff2020"/>
<rect x="671" y="409" width="1" height="36" fill="#fff"/>
<rect x="670" y="413" width="3" height="2" fill="#fff"/>
<rect x="674" y="405" width="1" height="17" fill="#fff"/>
<rect x="673" y="414" width="3" height="5" fill="#fff"/>
<rect x="674" y="415" width="1" height="3" fill="#ff2020"/>
<rect x="678" y="408" width="1" height="17" fill="#fff"/>
<rect x="677" y="417" width="3" height="2" fill="#fff"/>
<rect x="682" y="396" width="1" height="35" fill="#fff"/>
<rect x="681" y="407" width="3" height="11" fill="#fff"/>
<rect x="682" y="408" width="1" height="9" fill="#80ff80"/>
<rect x="686" y="379" width="1" height="39" fill="#fff"/>
<rect x="685" y="407" width="3" height="5" fill="#fff"/>
<rect x="686" y="408" width="1" height="3" fill="#ff2020"/>
<rect x="689" y="410" width="1" height="13" fill="#fff"/>
<rect x="688" y="411" width="3" height="11" fill="#fff"/>
<rect x="689" y="412" width="1" height="9" fill="#ff2020"/>
<rect x="693" y="421" width="1" height="17" fill="#fff"/>
<rect x="692" y="421" width="3" height="12" fill="#fff"/>
<rect x="693" y="422" width="1" height="10" fill="#ff2020"/>
<rect x="697" y="404" width="1" height="63" fill="#fff"/>
<rect x="696" y="406" width="3" height="27" fill="#fff"/>
<rect x="697" y="407" width="1" height="25" fill="#80ff80"/>
<rect x="700" y="380" width="1" height="39" fill="#fff"/>
<rect x="699" y="397" width="3" height="10" fill="#fff"/>
<rect x="700" y="398" width="1" height="8" fill="#80ff80"/>
<rect x="704" y="396" width="1" height="5" fill="#fff"/>
<rect x="703" y="397" width="3" height="3" fill="#fff"/>
<rect x="708" y="388" width="1" height="15" fill="#fff"/>
<rect x="707" y="391" width="3" height="9" fill="#fff"/>
<rect x="708" y="392" width="1" height="7" fill="#80ff80"/>
<rect x="711" y="367" width="1" height="50" fill="#fff"/>
<rect x="710" y="391" width="3" height="5" fill="#fff"/>
<rect x="711" y="392" width="1" height="3" fill="#ff2020"/>
<rect x="715" y="386" width="1" height="31" fill="#fff"/>
<rect x="714" y="395" width="3" height="16" fill="#fff"/>
<rect x="715" y="396" width="1" height="14" fill="#ff2020"/>
<rect x="719" y="389" width="1" height="47" fill="#fff"/>
<rect x="718" y="410" width="3" height="9" fill="#fff"/>
<rect x="719" y="411" width="1" height="7" fill="#ff2020"/>
<rect x="722" y="417" width="1" height="12" fill="#fff"/>
<rect x="721" y="418" width="3" height="3" fill="#fff"/>
<rect x="726" y="412" width="1" height="33" fill="#fff"/>
<rect x="725" y="420" width="3" height="22" fill="#fff"/>
<rect x="726" y="421" width="1" height="20" fill="#ff2020"/>
<rect x="730" y="422" width="1" height="24" fill="#fff"/>
<rect x="729" y="424" width="3" height="18" fill="#fff"/>
<rect x="730" y="425" width="1" height="16" fill="#80ff80"/>
<rect x="733" y="410" width="1" height="31" fill="#fff"/>
<rect x="732" y="423" width="3" height="2" fill="#fff"/>
<rect x="737" y="411" width="1" height="34" fill="#fff"/>
<rect x="736" y="423" width="3" height="8" fill="#fff"/>
<rect x="737" y="424" width="1" height="6" fill="#ff2020"/>
<rect x="741" y="416" width="1" height="16" fill="#fff"/>
<rect x="740" y="430" width="3" height="2" fill="#fff"/>
<rect x="744" y="381" width="1" height="63" fill="#fff"/>
<rect x="743" y="402" width="3" height="29" fill="#fff"/>
<rect x="744" y="403" width="1" height="27" fill="#80ff80"/>
<rect x="748" y="388" width="1" height="39" fill="#fff"/>
<rect x="747" y="402" width="3" height="13" fill="#fff"/>
<rect x="748" y="403" width="1" height="11" fill="#ff2020"/>
<rect x="752" y="394" width="1" height="45" fill="#fff"/>
<rect x="751" y="414" width="3" height="16" fill="#fff"/>
<rect x="752" y="415" width="1" height="14" fill="#ff2020"/>
<rect x="755" y="398" width="1" height="40" fill="#fff"/>
<rect x="754" y="412" width="3" height="18" fill="#fff"/>
<rect x="755" y="413" width="1" height="16" fill="#80ff80"/>
<rect x="759" y="405" width="1" height="23" fill="#fff"/>
<rect x="758" y="412" width="3" height="8" fill="#fff"/>
<rect x="759" y="413" width="1" height="6" fill="#ff2020"/>
<rect x="763" y="411" width="1" height="22" fill="#fff"/>
<rect x="762" y="419" width="3" height="3" fill="#fff"/>
<rect x="766" y="416" width="1" height="18" fill="#fff"/>
<rect x="765" y="421" width="3" height="9" fill="#fff"/>
<rect x="766" y="422" width="1" height="7" fill="#ff2020"/>
<rect x="770" y="429" width="1" height="18" fill="#fff"/>
<rect x="769" y="429" width="3" height="12" fill="#fff"/>
<rect x="770" y="430" width="1" height="10" fill="#ff2020"/>
<rect x="774" y="433" width="1" height="20" fill="#fff"/>
<rect x="773" y="440" width="3" height="12" fill="#fff"/>
<rect x="774" y="441" width="1" height="10" fill="#ff2020"/>
<rect x="778" y="439" width="1" height="16" fill="#fff"/>
<rect x="777" y="449" width="3" height="3" fill="#fff"/>
<rect x="781" y="442" width="1" height="9" fill="#fff"/>
<rect x="780" y="445" width="3" height="5" fill="#fff"/>
<rect x="781" y="446" width="1" height="3" fill="#80ff80"/>
<rect x="785" y="433" width="1" height="16" fill="#fff"/>
<rect x="784" y="434" width="3" height="12" fill="#fff"/>
<rect x="785" y="435" width="1" height="10" fill="#80ff80"/>
<rect x="789" y="420" width="1" height="19" fill="#fff"/>
<rect x="788" y="422" width="3" height="13" fill="#fff"/>
<rect x="789" y="423" width="1" height="11" fill="#80ff80"/>
<rect x="792" y="419" width="1" height="9" fill="#fff"/>
<rect x="791" y="420" width="3" height="3" fill="#fff"/>
<rect x="796" y="405" width="1" height="16" fill="#fff"/>
<rect x="795" y="410" width="3" height="11" fill="#fff"/>
<rect x="796" y="411" width="1" height="9" fill="#80ff80"/>
<rect x="800" y="402" width="1" height="11" fill="#fff"/>
<rect x="799" y="406" width="3" height="5" fill="#fff"/>
<rect x="800" y="407" width="1" height="3" fill="#80ff80"/>
<rect x="803" y="401" width="1" height="13" fill="#fff"/>
<rect x="802" y="403" width="3" height="4" fill="#fff"/>
<rect x="803" y="404" width="1" height="2" fill="#80ff80"/>
<rect x="807" y="397" width="1" height="13" fill="#fff"/>
<rect x="806" y="399" width="3" height="5" fill="#fff"/>
<rect x="807" y="400" width="1" height="3" fill="#80ff80"/>
<rect x="811" y="395" width="1" height="21" fill="#fff"/>
<rect x="810" y="399" width="3" height="12" fill="#fff"/>
<rect x="811" y="400" width="1" height="10" fill="#ff2020"/>
<rect x="814" y="404" width="1" height="9" fill="#fff"/>
<rect x="813" y="405" width="3" height="6" fill="#fff"/>
<rect x="814" y="406" width="1" height="4" fill="#80ff80"/>
<rect x="818" y="402" width="1" height="24" fill="#fff"/>
<rect x="817" y="405" width="3" height="14" fill="#fff"/>
<rect x="818" y="406" width="1" height="12" fill="#ff2020"/>
<rect x="822" y="415" width="1" height="15" fill="#fff"/>
<rect x="821" y="418" width="3" height="10" fill="#fff"/>
<rect x="822" y="419" width="1" height="8" fill="#ff2020"/>
<rect x="825" y="425" width="1" height="9" fill="#fff"/>
<rect x="824" y="427" width="3" height="6" fill="#fff"/>
<rect x="825" y="428" width="1" height="4" fill="#ff2020"/>
<rect x="829" y="421" width="1" height="27" fill="#fff"/>
<rect x="828" y="432" width="3" height="10" fill="#fff"/>
<rect x="829" y="433" width="1" height="8" fill="#ff2020"/>
<rect x="833" y="418" width="1" height="25" fill="#fff"/>
<rect x="832" y="430" width="3" height="12" fill="#fff"/>
<rect x="833" y="431" width="1" height="10" fill="#80ff80"/>
<rect x="836" y="429" width="1" height="9" fill="#fff"/>
<rect x="835" y="430" width="3" height="6" fill="#fff"/>
<rect x="836" y="431" width="1" height="4" fill="#ff2020"/>
<rect x="840" y="433" width="1" height="16" fill="#fff"/>
<rect x="839" y="435" width="3" height="10" fill="#fff"/>
<rect x="840" y="436" width="1" height="8" fill="#ff2020"/>
<rect x="844" y="442" width="1" height="17" fill="#fff"/>
<rect x="843" y="444" width="3" height="8" fill="#fff"/>
<rect x="844" y="445" width="1" height="6" fill="#ff2020"/>
<rect x="847" y="448" width="1" height="10" fill="#fff"/>
<rect x="846" y="451" width="3" height="2" fill="#fff"/>
<rect x="851" y="438" width="1" height="22" fill="#fff"/>
<rect x="850" y="445" width="3" height="8" fill="#fff"/>
<rect x="851" y="446" width="1" height="6" fill="#80ff80"/>
<rect x="855" y="441" width="1" height="16" fill="#fff"/>
<rect x="854" y="445" width="3" height="10" fill="#fff"/>
<rect x="855" y="446" width="1" height="8" fill="#ff2020"/>
<rect x="859" y="453" width="1" height="13" fill="#fff"/>
<rect x="858" y="454" width="3" height="12" fill="#fff"/>
<rect x="859" y="455" width="1" height="10" fill="#ff2020"/>
<rect x="862" y="459" width="1" height="19" fill="#fff"/>
<rect x="861" y="465" width="3" height="11" fill="#fff"/>
<rect x="862" y="466" width="1" height="9" fill="#ff2020"/>
<rect x="866" y="462" width="1" height="46" fill="#fff"/>
<rect x="865" y="475" width="3" height="17" fill="#fff"/>
<rect x="866" y="476" width="1" height="15" fill="#ff2020"/>
<rect x="870" y="489" width="1" height="25" fill="#fff"/>
<rect x="869" y="491" width="3" height="7" fill="#fff"/>
<rect x="870" y="492" width="1" height="5" fill="#ff2020"/>
<rect x="873" y="491" width="1" height="13" fill="#fff"/>
<rect x="872" y="496" width="3" height="2" fill="#fff"/>
<rect x="877" y="489" width="1" height="34" fill="#fff"/>
<rect x="876" y="496" width="3" height="14" fill="#fff"/>
<rect x="877" y="497" width="1" height="12" fill="#ff2020"/>
<rect x="881" y="503" width="1" height="11" fill="#fff"/>
<rect x="880" y="505" width="3" height="5" fill="#fff"/>
<rect x="881" y="506" width="1" height="3" fill="#80ff80"/>
<rect x="884" y="501" width="1" height="22" fill="#fff"/>
<rect x="883" y="505" width="3" height="18" fill="#fff"/>
<rect x="884" y="506" width="1" height="16" fill="#ff2020"/>
<rect x="888" y="519" width="1" height="12" fill="#fff"/>
<rect x="887" y="522" width="3" height="10" fill="#fff"/>
<rect x="888" y="523" width="1" height="8" fill="#ff2020"/>
<rect x="892" y="527" width="1" height="12" fill="#fff"/>
<rect x="891" y="529" width="3" height="3" fill="#fff"/>
<rect x="895" y="510" width="1" height="30" fill="#fff"/>
<rect x="894" y="529" width="3" height="6" fill="#fff"/>
<rect x="895" y="530" width="1" height="4" fill="#ff2020"/>
<rect x="899" y="531" width="1" height="15" fill="#fff"/>
<rect x="898" y="534" width="3" height="3" fill="#fff"/>
<rect x="903" y="515" width="1" height="43" fill="#fff"/>
<rect x="902" y="536" width="3" height="13" fill="#fff"/>
<rect x="903" y="537" width="1" height="11" fill="#ff2020"/>
<rect x="906" y="530" width="1" height="21" fill="#fff"/>
<rect x="905" y="539" width="3" height="10" fill="#fff"/>
<rect x="906" y="540" width="1" height="8" fill="#80ff80"/>
<rect x="910" y="524" width="1" height="18" fill="#fff"/>
<rect x="909" y="532" width="3" height="8" fill="#fff"/>
<rect x="910" y="533" width="1" height="6" fill="#80ff80"/>
<rect x="914" y="497" width="1" height="38" fill="#fff"/>
<rect x="913" y="514" width="3" height="19" fill="#fff"/>
<rect x="914" y="515" width="1" height="17" fill="#80ff80"/>
<rect x="917" y="513" width="1" height="10" fill="#fff"/>
<rect x="916" y="514" width="3" height="9" fill="#fff"/>
<rect x="917" y="515" width="1" height="7" fill="#ff2020"/>
<rect x="921" y="510" width="1" height="20" fill="#fff"/>
<rect x="920" y="522" width="3" height="3" fill="#fff"/>
<rect x="925" y="513" width="1" height="11" fill="#fff"/>
<rect x="924" y="519" width="3" height="6" fill="#fff"/>
<rect x="925" y="520" width="1" height="4" fill="#80ff80"/>
<rect x="928" y="515" width="1" height="8" fill="#fff"/>
<rect x="927" y="516" width="3" height="4" fill="#fff"/>
<rect x="928" y="517" width="1" height="2" fill="#80ff80"/>
<rect x="932" y="513" width="1" height="13" fill="#fff"/>
<rect x="931" y="516" width="3" height="6" fill="#fff"/>
<rect x="932" y="517" width="1" height="4" fill="#ff2020"/>
<rect x="936" y="509" width="1" height="19" fill="#fff"/>
<rect x="935" y="521" width="3" height="2" fill="#fff"/>
<rect x="940" y="514" width="1" height="10" fill="#fff"/>
<rect x="939" y="515" width="3" height="8" fill="#fff"/>
<rect x="940" y="516" width="1" height="6" fill="#80ff80"/>
<rect x="943" y="512" width="1" height="5" fill="#fff"/>
<rect x="942" y="515" width="3" height="2" fill="#fff"/>
<rect x="947" y="510" width="1" height="14" fill="#fff"/>
<rect x="946" y="514" width="3" height="3" fill="#fff"/>
<rect x="951" y="507" width="1" height="9" fill="#fff"/>
<rect x="950" y="514" width="3" height="2" fill="#fff"/>
<rect x="954" y="512" width="1" height="18" fill="#fff"/>
<rect x="953" y="514" width="3" height="8" fill="#fff"/>
<rect x="954" y="515" width="1" height="6" fill="#ff2020"/>
<rect x="958" y="515" width="1" height="12" fill="#fff"/>
<rect x="957" y="519" width="3" height="3" fill="#fff"/>
<rect x="962" y="516" width="1" height="8" fill="#fff"/>
<rect x="961" y="519" width="3" height="4" fill="#fff"/>
<rect x="962" y="520" width="1" height="2" fill="#ff2020"/>
<rect x="965" y="520" width="1" height="9" fill="#fff"/>
<rect x="964" y="522" width="3" height="2" fill="#fff"/>
<rect x="969" y="508" width="1" height="18" fill="#fff"/>
<rect x="968" y="514" width="3" height="9" fill="#fff"/>
<rect x="969" y="515" width="1" height="7" fill="#80ff80"/>
<rect x="973" y="503" width="1" height="15" fill="#fff"/>
<rect x="972" y="514" width="3" height="2" fill="#fff"/>
<rect x="976" y="514" width="1" height="9" fill="#fff"/>
<rect x="975" y="514" width="3" height="2" fill="#fff"/>
<rect x="980" y="513" width="1" height="14" fill="#fff"/>
<rect x="979" y="515" width="3" height="6" fill="#fff"/>
<rect x="980" y="516" width="1" height="4" fill="#ff2020"/>
<rect x="984" y="505" width="1" height="20" fill="#fff"/>
<rect x="983" y="512" width="3" height="9" fill="#fff"/>
<rect x="984" y="513" width="1" height="7" fill="#80ff80"/>
<rect x="987" y="506" width="1" height="14" fill="#fff"/>
<rect x="986" y="510" width="3" height="3" fill="#fff"/>
<rect x="991" y="505" width="1" height="9" fill="#fff"/>
<rect x="990" y="510" width="3" height="3" fill="#fff"/>
<rect x="995" y="495" width="1" height="24" fill="#fff"/>
<rect x="994" y="512" width="3" height="2" fill="#fff"/>
<rect x="998" y="506" width="1" height="14" fill="#fff"/>
<rect x="997" y="509" width="3" height="4" fill="#fff"/>
<rect x="998" y="510" width="1" height="2" fill="#80ff80"/>
<rect x="1002" y="500" width="1" height="12" fill="#fff"/>
<rect x="1001" y="506" width="3" height="4" fill="#fff"/>
<rect x="1002" y="507" width="1" height="2" fill="#80ff80"/>
<rect x="1006" y="504" width="1" height="6" fill="#fff"/>
<rect x="1005" y="505" width="3" height="2" fill="#fff"/>
<rect x="1009" y="500" width="1" height="26" fill="#fff"/>
<rect x="1008" y="505" width="3" height="12" fill="#fff"/>
<rect x="1009" y="506" width="1" height="10" fill="#ff2020"/>
<rect x="1013" y="507" width="1" height="14" fill="#fff"/>
<rect x="1012" y="510" width="3" height="7" fill="#fff"/>
<rect x="1013" y="511" width="1" height="5" fill="#80ff80"/>
<rect x="1017" y="500" width="1" height="12" fill="#fff"/>
<rect x="1016" y="501" width="3" height="10" fill="#fff"/>
<rect x="1017" y="502" width="1" height="8" fill="#80ff80"/>
<rect x="1020" y="489" width="1" height="12" fill="#fff"/>
<rect x="1019" y="499" width="3" height="3" fill="#fff"/>
<rect x="1024" y="490" width="1" height="10" fill="#fff"/>
<rect x="1023" y="497" width="3" height="3" fill="#fff"/>
<rect x="1028" y="477" width="1" height="22" fill="#fff"/>
<rect x="1027" y="485" width="3" height="13" fill="#fff"/>
<rect x="1028" y="486" width="1" height="11" fill="#80ff80"/>
<rect x="1032" y="485" width="1" height="7" fill="#fff"/>
<rect x="1031" y="485" width="3" height="2" fill="#fff"/>
<rect x="1035" y="456" width="1" height="34" fill="#fff"/>
<rect x="1034" y="466" width="3" height="21" fill="#fff"/>
<rect x="1035" y="467" width="1" height="19" fill="#80ff80"/>
<rect x="1039" y="465" width="1" height="11" fill="#fff"/>
<rect x="1038" y="466" width="3" height="4" fill="#fff"/>
<rect x="1039" y="467" width="1" height="2" fill="#ff2020"/>
<rect x="1043" y="464" width="1" height="15" fill="#fff"/>
<rect x="1042" y="469" width="3" height="6" fill="#fff"/>
<rect x="1043" y="470" width="1" height="4" fill="#ff2020"/>
<rect x="1046" y="463" width="1" height="33" fill="#fff"/>
<rect x="1045" y="467" width="3" height="8" fill="#fff"/>
<rect x="1046" y="468" width="1" height="6" fill="#80ff80"/>
<rect x="1050" y="464" width="1" height="4" fill="#fff"/>
<rect x="1049" y="467" width="3" height="2" fill="#fff"/>
<rect x="1054" y="455" width="1" height="23" fill="#fff"/>
<rect x="1053" y="468" width="3" height="3" fill="#fff"/>
<rect x="1057" y="469" width="1" height="3" fill="#fff"/>
<rect x="1056" y="470" width="3" height="2" fill="#fff"/>
<rect x="1061" y="469" width="1" height="33" fill="#fff"/>
<rect x="1060" y="470" width="3" height="29" fill="#fff"/>
<rect x="1061" y="471" width="1" height="27" fill="#ff2020"/>
<rect x="1065" y="492" width="1" height="13" fill="#fff"/>
<rect x="1064" y="498" width="3" height="7" fill="#fff"/>
<rect x="1065" y="499" width="1" height="5" fill="#ff2020"/>
<rect x="1068" y="495" width="1" height="13" fill="#fff"/>
<rect x="1067" y="497" width="3" height="8" fill="#fff"/>
<rect x="1068" y="498" width="1" height="6" fill="#80ff80"/>
<rect x="1072" y="478" width="1" height="30" fill="#fff"/>
<rect x="1071" y="497" width="3" height="11" fill="#fff"/>
<rect x="1072" y="498" width="1" height="9" fill="#ff2020"/>
<rect x="1076" y="483" width="1" height="33" fill="#fff"/>
<rect x="1075" y="496" width="3" height="12" fill="#fff"/>
<rect x="1076" y="497" width="1" height="10" fill="#80ff80"/>
<rect x="1079" y="490" width="1" height="20" fill="#fff"/>
<rect x="1078" y="496" width="3" height="12" fill="#fff"/>
<rect x="1079" y="497" width="1" height="10" fill="#ff2020"/>
<rect x="1083" y="507" width="1" height="1" fill="#fff"/>
<rect x="1082" y="507" width="3" height="2" fill="#fff"/>
<rect x="1087" y="501" width="1" height="9" fill="#fff"/>
<rect x="1086" y="504" width="3" height="4" fill="#fff"/>
<rect x="1087" y="505" width="1" height="2" fill="#80ff80"/>
<rect x="1090" y="494" width="1" height="14" fill="#fff"/>
<rect x="1089" y="494" width="3" height="11" fill="#fff"/>
<rect x="1090" y="495" width="1" height="9" fill="#80ff80"/>
<rect x="1094" y="493" width="1" height="36" fill="#fff"/>
<rect x="1093" y="494" width="3" height="22" fill="#fff"/>
<rect x="1094" y="495" width="1" height="20" fill="#ff2020"/>
<rect x="1098" y="491" width="1" height="31" fill="#fff"/>
<rect x="1097" y="501" width="3" height="15" fill="#fff"/>
<rect x="1098" y="502" width="1" height="13" fill="#80ff80"/>
<rect x="1101" y="491" width="1" height="15" fill="#fff"/>
<rect x="1100" y="501" width="3" height="5" fill="#fff"/>
<rect x="1101" y="502" width="1" height="3" fill="#ff2020"/>
<rect x="1105" y="503" width="1" height="11" fill="#fff"/>
<rect x="1104" y="505" width="3" height="9" fill="#fff"/>
<rect x="1105" y="506" width="1" height="7" fill="#ff2020"/>
<rect x="1109" y="509" width="1" height="6" fill="#fff"/>
<rect x="1108" y="513" width="3" height="2" fill="#fff"/>
<rect x="1113" y="512" width="1" height="2" fill="#fff"/>
<rect x="1112" y="512" width="3" height="2" fill="#fff"/>
<rect x="1116" y="505" width="1" height="9" fill="#fff"/>
<rect x="1115" y="512" width="3" height="2" fill="#fff"/>
<rect x="1120" y="495" width="1" height="23" fill="#fff"/>
<rect x="1119" y="506" width="3" height="7" fill="#fff"/>
<rect x="1120" y="507" width="1" height="5" fill="#80ff80"/>
<rect x="1124" y="501" width="1" height="17" fill="#fff"/>
<rect x="1123" y="502" width="3" height="5" fill="#fff"/>
<rect x="1124" y="503" width="1" height="3" fill="#80ff80"/>
<rect x="1127" y="494" width="1" height="12" fill="#fff"/>
<rect x="1126" y="496" width="3" height="7" fill="#fff"/>
<rect x="1127" y="497" width="1" height="5" fill="#80ff80"/>
<rect x="1131" y="492" width="1" height="14" fill="#fff"/>
<rect x="1130" y="496" width="3" height="8" fill="#fff"/>
<rect x="1131" y="497" width="1" height="6" fill="#ff2020"/>
<rect x="1135" y="501" width="1" height="5" fill="#fff"/>
<rect x="1134" y="502" width="3" height="2" fill="#fff"/>
<rect x="1138" y="486" width="1" height="26" fill="#fff"/>
<rect x="1137" y="494" width="3" height="9" fill="#fff"/>
<rect x="1138" y="495" width="1" height="7" fill="#80ff80"/>
<rect x="1142" y="483" width="1" height="15" fill="#fff"/>
<rect x="1141" y="484" width="3" height="11" fill="#fff"/>
<rect x="1142" y="485" width="1" height="9" fill="#80ff80"/>
<rect x="1146" y="468" width="1" height="18" fill="#fff"/>
<rect x="1145" y="471" width="3" height="14" fill="#fff"/>
<rect x="1146" y="472" width="1" height="12" fill="#80ff80"/>
<rect x="1149" y="463" width="1" height="11" fill="#fff"/>
<rect x="1148" y="469" width="3" height="3" fill="#fff"/>
<rect x="1153" y="460" width="1" height="11" fill="#fff"/>
<rect x="1152" y="464" width="3" height="6" fill="#fff"/>
<rect x="1153" y="465" width="1" height="4" fill="#80ff80"/>
<rect x="1157" y="458" width="1" height="16" fill="#fff"/>
<rect x="1156" y="464" width="3" height="7" fill="#fff"/>
<rect x="1157" y="465" width="1" height="5" fill="#ff2020"/>
<rect x="1160" y="466" width="1" height="5" fill="#fff"/>
<rect x="1159" y="469" width="3" height="2" fill="#fff"/>
<rect x="1164" y="454" width="1" height="21" fill="#fff"/>
<rect x="1163" y="459" width="3" height="11" fill="#fff"/>
<rect x="1164" y="460" width="1" height="9" fill="#80ff80"/>
<rect x="1168" y="439" width="1" height="33" fill="#fff"/>
<rect x="1167" y="447" width="3" height="13" fill="#fff"/>
<rect x="1168" y="448" width="1" height="11" fill="#80ff80"/>
<rect x="1171" y="445" width="1" height="2" fill="#fff"/>
<rect x="1170" y="447" width="3" height="2" fill="#fff"/>
<rect x="1175" y="444" width="1" height="22" fill="#fff"/>
<rect x="1174" y="447" width="3" height="15" fill="#fff"/>
<rect x="1175" y="448" width="1" height="13" fill="#ff2020"/>
<rect x="1179" y="446" width="1" height="22" fill="#fff"/>
<rect x="1178" y="449" width="3" height="13" fill="#fff"/>
<rect x="1179" y="450" width="1" height="11" fill="#80ff80"/>
<rect x="1182" y="434" width="1" height="15" fill="#fff"/>
<rect x="1181" y="435" width="3" height="15" fill="#fff"/>
<rect x="1182" y="436" width="1" height="13" fill="#80ff80"/>
<rect x="1186" y="426" width="1" height="10" fill="#fff"/>
<rect x="1185" y="431" width="3" height="5" fill="#fff"/>
<rect x="1186" y="432" width="1" height="3" fill="#80ff80"/>
<rect x="1190" y="430" width="1" height="4" fill="#fff"/>
<rect x="1189" y="431" width="3" height="2" fill="#fff"/>
<rect x="1193" y="430" width="1" height="17" fill="#fff"/>
<rect x="1192" y="431" width="3" height="8" fill="#fff"/>
<rect x="1193" y="432" width="1" height="6" fill="#ff2020"/>
<rect x="1197" y="427" width="1" height="17" fill="#fff"/>
<rect x="1196" y="433" width="3" height="6" fill="#fff"/>
<rect x="1197" y="434" width="1" height="4" fill="#80ff80"/>
<rect x="1201" y="430" width="1" height="11" fill="#fff"/>
<rect x="1200" y="432" width="3" height="2" fill="#fff"/>
<rect x="1205" y="421" width="1" height="19" fill="#fff"/>
<rect x="1204" y="429" width="3" height="4" fill="#fff"/>
<rect x="1205" y="430" width="1" height="2" fill="#80ff80"/>
<rect x="1208" y="423" width="1" height="10" fill="#fff"/>
<rect x="1207" y="429" width="3" height="3" fill="#fff"/>
<rect x="1212" y="422" width="1" height="18" fill="#fff"/>
<rect x="1211" y="428" width="3" height="4" fill="#fff"/>
<rect x="1212" y="429" width="1" height="2" fill="#80ff80"/>
<rect x="1216" y="415" width="1" height="16" fill="#fff"/>
<rect x="1215" y="417" width="3" height="12" fill="#fff"/>
<rect x="1216" y="418" width="1" height="10" fill="#80ff80"/>
<rect x="1219" y="411" width="1" height="14" fill="#fff"/>
<rect x="1218" y="417" width="3" height="2" fill="#fff"/>
<rect x="1223" y="417" width="1" height="10" fill="#fff"/>
<rect x="1222" y="418" width="3" height="7" fill="#fff"/>
<rect x="1223" y="419" width="1" height="5" fill="#ff2020"/>
<rect x="1227" y="423" width="1" height="26" fill="#fff"/>
<rect x="1226" y="424" width="3" height="20" fill="#fff"/>
<rect x="1227" y="425" width="1" height="18" fill="#ff2020"/>
<rect x="1230" y="424" width="1" height="19" fill="#fff"/>
<rect x="1229" y="440" width="3" height="4" fill="#fff"/>
<rect x="1230" y="441" width="1" height="2" fill="#80ff80"/>
<rect x="1234" y="432" width="1" height="10" fill="#fff"/>
<rect x="1233" y="437" width="3" height="4" fill="#fff"/>
<rect x="1234" y="438" width="1" height="2" fill="#80ff80"/>
<rect x="1238" y="420" width="1" height="18" fill="#fff"/>
<rect x="1237" y="422" width="3" height="16" fill="#fff"/>
<rect x="1238" y="423" width="1" height="14" fill="#80ff80"/>
<rect x="1241" y="421" width="1" height="5" fill="#fff"/>
<rect x="1240" y="422" width="3" height="2" fill="#fff"/>
<rect x="1245" y="415" width="1" height="10" fill="#fff"/>
<rect x="1244" y="416" width="3" height="8" fill="#fff"/>
<rect x="1245" y="417" width="1" height="6" fill="#80ff80"/>
<rect x="1249" y="410" width="1" height="27" fill="#fff"/>
<rect x="1248" y="416" width="3" height="10" fill="#fff"/>
<rect x="1249" y="417" width="1" height="8" fill="#ff2020"/>
<rect x="1252" y="405" width="1" height="26" fill="#fff"/>
<rect x="1251" y="418" width="3" height="8" fill="#fff"/>
<rect x="1252" y="419" width="1" height="6" fill="#80ff80"/>
<rect x="1256" y="409" width="1" height="33" fill="#fff"/>
<rect x="1255" y="418" width="3" height="14" fill="#fff"/>
<rect x="1256" y="419" width="1" height="12" fill="#ff2020"/>
<rect x="1260" y="416" width="1" height="18" fill="#fff"/>
<rect x="1259" y="431" width="3" height="2" fill="#fff"/>
<rect x="1263" y="430" width="1" height="15" fill="#fff"/>
<rect x="1262" y="432" width="3" height="8" fill="#fff"/>
<rect x="1263" y="433" width="1" height="6" fill="#ff2020"/>
<rect x="1267" y="433" width="1" height="14" fill="#fff"/>
<rect x="1266" y="438" width="3" height="2" fill="#fff"/>
<rect x="1271" y="413" width="1" height="27" fill="#fff"/>
<rect x="1270" y="417" width="3" height="22" fill="#fff"/>
<rect x="1271" y="418" width="1" height="20" fill="#80ff80"/>
<rect x="1274" y="403" width="1" height="14" fill="#fff"/>
<rect x="1273" y="414" width="3" height="4" fill="#fff"/>
<rect x="1274" y="415" width="1" height="2" fill="#80ff80"/>
<rect x="1278" y="412" width="1" height="3" fill="#fff"/>
<rect x="1277" y="413" width="3" height="2" fill="#fff"/>
<rect x="1282" y="403" width="1" height="16" fill="#fff"/>
<rect x="1281" y="406" width="3" height="8" fill="#fff"/>
<rect x="1282" y="407" width="1" height="6" fill="#80ff80"/>
<rect x="1286" y="383" width="1" height="36" fill="#fff"/>
<rect x="1285" y="389" width="3" height="18" fill="#fff"/>
<rect x="1286" y="390" width="1" height="16" fill="#80ff80"/>
<rect x="1289" y="382" width="1" height="18" fill="#fff"/>
<rect x="1288" y="389" width="3" height="9" fill="#fff"/>
<rect x="1289" y="390" width="1" height="7" fill="#ff2020"/>
<rect x="1293" y="369" width="1" height="34" fill="#fff"/>
<rect x="1292" y="385" width="3" height="13" fill="#fff"/>
<rect x="1293" y="386" width="1" height="11" fill="#80ff80"/>
<rect x="1297" y="379" width="1" height="17" fill="#fff"/>
<rect x="1296" y="385" width="3" height="8" fill="#fff"/>
<rect x="1297" y="386" width="1" height="6" fill="#ff2020"/>
<rect x="1300" y="379" width="1" height="21" fill="#fff"/>
<rect x="1299" y="392" width="3" height="2" fill="#fff"/>
<rect x="1304" y="385" width="1" height="11" fill="#fff"/>
<rect x="1303" y="390" width="3" height="4" fill="#fff"/>
<rect x="1304" y="391" width="1" height="2" fill="#80ff80"/>
<rect x="1308" y="382" width="1" height="17" fill="#fff"/>
<rect x="1307" y="390" width="3" height="2" fill="#fff"/>
<rect x="1311" y="375" width="1" height="25" fill="#fff"/>
<rect x="1310" y="390" width="3" height="7" fill="#fff"/>
<rect x="1311" y="391" width="1" height="5" fill="#ff2020"/>
<rect x="1315" y="375" width="1" height="26" fill="#fff"/>
<rect x="1314" y="378" width="3" height="19" fill="#fff"/>
<rect x="1315" y="379" width="1" height="17" fill="#80ff80"/>
<rect x="1319" y="372" width="1" height="16" fill="#fff"/>
<rect x="1318" y="374" width="3" height="5" fill="#fff"/>
<rect x="1319" y="375" width="1" height="3" fill="#80ff80"/>
<rect x="1322" y="363" width="1" height="13" fill="#fff"/>
<rect x="1321" y="363" width="3" height="12" fill="#fff"/>
<rect x="1322" y="364" width="1" height="10" fill="#80ff80"/>
<rect x="1326" y="357" width="1" height="15" fill="#fff"/>
<rect x="1325" y="363" width="3" height="3" fill="#fff"/>
<rect x="1330" y="364" width="1" height="8" fill="#fff"/>
<rect x="1329" y="365" width="3" height="5" fill="#fff"/>
<rect x="1330" y="366" width="1" height="3" fill="#ff2020"/>
<rect x="1333" y="344" width="1" height="43" fill="#fff"/>
<rect x="1332" y="356" width="3" height="14" fill="#fff"/>
<rect x="1333" y="357" width="1" height="12" fill="#80ff80"/>
<rect x="1337" y="353" width="1" height="25" fill="#fff"/>
<rect x="1336" y="356" width="3" height="12" fill="#fff"/>
<rect x="1337" y="357" width="1" height="10" fill="#ff2020"/>
<rect x="1341" y="348" width="1" height="22" fill="#fff"/>
<rect x="1340" y="352" width="3" height="16" fill="#fff"/>
<rect x="1341" y="353" width="1" height="14" fill="#80ff80"/>
<rect x="1344" y="339" width="1" height="20" fill="#fff"/>
<rect x="1343" y="343" width="3" height="10" fill="#fff"/>
<rect x="1344" y="344" width="1" height="8" fill="#80ff80"/>
<rect x="1348" y="335" width="1" height="14" fill="#fff"/>
<rect x="1347" y="343" width="3" height="3" fill="#fff"/>
<rect x="1352" y="296" width="1" height="54" fill="#fff"/>
<rect x="1351" y="297" width="3" height="49" fill="#fff"/>
<rect x="1352" y="298" width="1" height="47" fill="#80ff80"/>
<rect x="1355" y="294" width="1" height="36" fill="#fff"/>
<rect x="1354" y="297" width="3" height="34" fill="#fff"/>
<rect x="1355" y="298" width="1" height="32" fill="#ff2020"/>
<rect x="1359" y="311" width="1" height="27" fill="#fff"/>
<rect x="1358" y="317" width="3" height="14" fill="#fff"/>
<rect x="1359" y="318" width="1" height="12" fill="#80ff80"/>
<rect x="1363" y="312" width="1" height="20" fill="#fff"/>
<rect x="1362" y="317" width="3" height="14" fill="#fff"/>
<rect x="1363" y="318" width="1" height="12" fill="#ff2020"/>
<rect x="1366" y="316" width="1" height="20" fill="#fff"/>
<rect x="1365" y="318" width="3" height="13" fill="#fff"/>
<rect x="1366" y="319" width="1" height="11" fill="#80ff80"/>
<polyline fill="none" stroke="#f4f000" stroke-width="1.2" points="0.8,160.2 4.5,161.7 8.2,164.1 11.9,166.5 15.6,169 19.3,171.4 22.9,173.9 26.6,176.7 30.3,179.5 34,182 37.7,183.5 41.3,183.8 45,182.9 48.7,180.7 52.4,177.4 56.1,173.3 59.7,169.2 63.4,165.6 67.1,162.6 70.8,160.4 74.5,158.5 78.2,157.4 81.8,157.4 85.5,159.2 89.2,163.3 92.9,169.2 96.6,176.4 100.2,184 103.9,192 107.6,201 111.3,211.1 115,222.2 118.6,233.3 122.3,240.7 126,244.5 129.7,244.9 133.4,244.6 137,243.2 140.7,240.5 144.4,237.3 148.1,234.3 151.8,231.3 155.5,228.5 159.1,227.3 162.8,228.3 166.5,231.6 170.2,237.2 173.9,244.6 177.5,253.9 181.2,263.5 184.9,273.2 188.6,282.3 192.3,289.8 195.9,295.9 199.6,300.4 203.3,303.7 207,305.9 210.7,308.6 214.3,312 218,317.1 221.7,323.4 225.4,330.8 229.1,338.1 232.8,345.5 236.4,352.9 240.1,360.2 243.8,366.4 247.5,370.6 251.2,373.1 254.8,373.9 258.5,373.5 262.2,372.3 265.9,371.6 269.6,371.7 273.2,371.8 276.9,370.9 280.6,367.8 284.3,362.9 288,357.4 291.6,352.3 295.3,347.3 299,341.4 302.7,334.6 306.4,327.9 310.1,322.2 313.7,318.6 317.4,317.1 321.1,317.6 324.8,319.2 328.5,321.2 332.1,322.8 335.8,324 339.5,325.4 343.2,327.5 346.9,330.2 350.5,333.5 354.2,337.4 357.9,341.3 361.6,344.5 365.3,344.9 368.9,342.3 372.6,337 376.3,331.1 380,325.2 383.7,319.2 387.4,314 391,311.2 394.7,310.8 398.4,316 402.1,325.7 405.8,340 409.4,354.9 413.1,368.4 416.8,378.8 420.5,386.1 424.2,391.9 427.8,396.4 431.5,398 435.2,396.6 438.9,393.1 442.6,389.1 446.2,384.7 449.9,381.7 453.6,380.4 457.3,381.1 461,383.4 464.7,387.1 468.3,392 472,396.7 475.7,401.3 479.4,405.8 483.1,410.2 486.7,414.9 490.4,419.7 494.1,424.3 497.8,426.8 501.5,426.9 505.1,425 508.8,422.7 512.5,419.8 516.2,416.3 519.9,412.6 523.6,408.2 527.2,402.6 530.9,395.7 534.6,388.3 538.3,381.5 542,375.9 545.6,371.3 549.3,367.3 553,363.9 556.7,362.1 560.4,361.9 564,362.6 567.7,363.2 571.4,364.4 575.1,366.3 578.8,369.9 582.4,374.9 586.1,381.2 589.8,388 593.5,393.9 597.2,398.6 600.9,401.9 604.5,404.6 608.2,407.1 611.9,409.2 615.6,410.8 619.3,411.9 622.9,413 626.6,414.1 630.3,416.4 634,418.4 637.7,419.5 641.3,418.8 645,416.6 648.7,413.5 652.4,409.6 656.1,405.6 659.7,401.6 663.4,398.7 667.1,397.7 670.8,398.5 674.5,400.1 678.2,402.1 681.8,405.1 685.5,408.9 689.2,413.2 692.9,416.8 696.6,418.6 700.2,418.7 703.9,417.8 707.6,416.8 711.3,415.9 715,415.6 718.6,416 722.3,417 726,417.9 729.7,418.8 733.4,419.5 737,420.1 740.7,420.6 744.4,421.2 748.1,421.7 751.8,422.2 755.5,422.7 759.1,423.2 762.8,424 766.5,425.4 770.2,427.5 773.9,430 777.5,432.5 781.2,434.9 784.9,436.3 788.6,436.6 792.3,435.4 795.9,433.4 799.6,430.4 803.3,426.7 807,423 810.7,419.3 814.4,417.2 818,416.8 821.7,418.4 825.4,420.2 829.1,422.3 832.8,424.9 836.4,427.9 840.1,430.9 843.8,434.3 847.5,438 851.2,442.2 854.8,446.5 858.5,451.2 862.2,456.6 865.9,462.8 869.6,469 873.2,474.8 876.9,480.4 880.6,486.3 884.3,492.5 888,498.9 891.7,505.4 895.3,511.8 899,517.5 902.7,522.1 906.4,525.7 910.1,528 913.7,529.4 917.4,529.5 921.1,528.9 924.8,527.6 928.5,525.8 932.1,523.9 935.8,522.1 939.5,520.6 943.2,519.5 946.9,518.9 950.5,518.2 954.2,517.7 957.9,517.2 961.6,516.7 965.3,516.3 969,515.8 972.6,515.4 976.3,514.9 980,514.5 983.7,514 987.4,513.6 991,513.1 994.7,512.7 998.4,512.2 1002.1,511.7 1005.8,511.1 1009.4,510.6 1013.1,510 1016.8,509.4 1020.5,508.5 1024.2,507.3 1027.8,505.6 1031.5,503 1035.2,499.8 1038.9,496.1 1042.6,492 1046.3,487.4 1049.9,482.9 1053.6,479.9 1057.3,478.3 1061,478.3 1064.7,479.4 1068.3,481.5 1072,484 1075.7,486.8 1079.4,489.7 1083.1,492.9 1086.7,496 1090.4,499.1 1094.1,501.8 1097.8,504 1101.5,505.6 1105.1,507.1 1108.8,508.2 1112.5,508.8 1116.2,509 1119.9,509 1123.6,508.7 1127.2,507.8 1130.9,506.4 1134.6,504.8 1138.3,503 1142,500.6 1145.6,497.8 1149.3,494.7 1153,491.5 1156.7,487.9 1160.4,484 1164,479.8 1167.7,475.7 1171.4,471.5 1175.1,467.6 1178.8,463.7 1182.5,460 1186.1,456.4 1189.8,452.7 1193.5,449.2 1197.2,446.1 1200.9,443.3 1204.5,440.7 1208.2,438.1 1211.9,435.8 1215.6,434.1 1219.3,432.7 1222.9,431.5 1226.6,430.6 1230.3,429.9 1234,429.6 1237.7,429.4 1241.3,429.2 1245,429 1248.7,428.9 1252.4,428.7 1256.1,428.6 1259.8,428.4 1263.4,428.3 1267.1,428 1270.8,427.2 1274.5,425.9 1278.2,424.2 1281.8,422.3 1285.5,419.6 1289.2,415.8 1292.9,411.3 1296.6,406.8 1300.2,402.8 1303.9,399.2 1307.6,396.2 1311.3,393.1 1315,390.2 1318.6,387.4 1322.3,384.8 1326,382.1 1329.7,379.3 1333.4,375.6 1337.1,371.1 1340.7,366 1344.4,360.5 1348.1,354.5 1351.8,348.2 1355.5,342.5 1359.1,337.3 1362.8,332.7 1366.5,329.7"/>
<polyline fill="none" stroke="#3cb4f0" stroke-width="3" stroke-linejoin="miter" points="1,191 15,198 81,142 111,272.5 141,212 145,212.5 229,398.5 375.5,245.5 476,470 541,327.5 902.5,555.5 1034.5,454 1119,532"/>
<polyline fill="none" stroke="#ffee00" stroke-width="3" points="1119,532 1222.5,405.5 1234,457"/>
</svg>
<div style="position:absolute;left:1407px;top:21px;width:1px;height:680px;background:#6c8088"></div>
<div style="position:absolute;left:1px;top:700px;width:1407px;height:1px;background:#6c8088"></div>
<div style="position:absolute;left:3px;top:688px;font-size:11px;line-height:13px;color:#a6a096;letter-spacing:-0.22px;will-change:transform;white-space:nowrap">© IT-Finance.com</div>
<div id="leg">
<div style="color:#9c8a78;width:35px"><span>Precio</span></div><div style="color:#ffff00;width:72px;letter-spacing:-0.2px"><span>MM (Simple 9)</span></div><div style="color:#8000c0;width:43px"><span>Boll sup</span></div><div style="color:#8000c0;width:37px"><span>Boll inf</span></div><div style="color:#8000c0;width:88px"><span>Boll media ( 89 2)</span></div>
</div>
<div class="tk" style="top:64px"></div>
<div class="yl" style="top:58px">25.800</div>
<div class="tk" style="top:136px"></div>
<div class="yl" style="top:130px">25.750</div>
<div class="tk" style="top:208px"></div>
<div class="yl" style="top:202px">25.700</div>
<div class="tk" style="top:281px"></div>
<div class="yl" style="top:274px">25.650</div>
<div class="tk" style="top:353px"></div>
<div class="yl" style="top:346px">25.600</div>
<div class="tk" style="top:425px"></div>
<div class="yl" style="top:418px">25.550</div>
<div class="tk" style="top:497px"></div>
<div class="yl" style="top:490px;font-weight:bold;font-size:12px;letter-spacing:0.55px">25.500</div>
<div class="tk" style="top:569px"></div>
<div class="yl" style="top:563px">25.450</div>
<div class="tk" style="top:641px"></div>
<div class="yl" style="top:635px">25.400</div>
<div class="tt" style="left:41px"></div>
<div class="xl" style="left:11px">8:00</div>
<div class="tt" style="left:85px"></div>
<div class="xl" style="left:55px">9:00</div>
<div class="tt" style="left:129px"></div>
<div class="xl" style="left:99px">10:00</div>
<div class="tt" style="left:173px"></div>
<div class="xl" style="left:143px">11:00</div>
<div class="tt" style="left:217px"></div>
<div class="xl" style="left:187px">12:00</div>
<div class="tt" style="left:261px"></div>
<div class="xl" style="left:231px">13:00</div>
<div class="tt" style="left:306px"></div>
<div class="xl" style="left:276px">14:00</div>
<div class="tt" style="left:350px"></div>
<div class="xl" style="left:320px">15:00</div>
<div class="tt" style="left:394px"></div>
<div class="xl" style="left:364px">16:00</div>
<div class="tt" style="left:438px"></div>
<div class="xl" style="left:408px">17:00</div>
<div class="tt" style="left:482px"></div>
<div class="xl" style="left:452px">18:00</div>
<div class="tt" style="left:526px"></div>
<div class="xl" style="left:496px">19:00</div>
<div class="tt" style="left:571px"></div>
<div class="xl" style="left:541px">20:00</div>
<div class="tt" style="left:615px"></div>
<div class="xl" style="left:585px">21:00</div>
<div class="tt" style="left:659px"></div>
<div class="xl" style="left:629px">22:00</div>
<div class="tt" style="left:703px"></div>
<div class="xl" style="left:673px">23:00</div>
<div class="tt" style="left:747px"></div>
<div class="xl" style="left:717px;font-weight:bold;font-size:12px">13</div>
<div class="tt" style="left:791px"></div>
<div class="xl" style="left:761px">1:00</div>
<div class="tt" style="left:836px"></div>
<div class="xl" style="left:806px">2:00</div>
<div class="tt" style="left:880px"></div>
<div class="xl" style="left:850px">3:00</div>
<div class="tt" style="left:924px"></div>
<div class="xl" style="left:894px">4:00</div>
<div class="tt" style="left:968px"></div>
<div class="xl" style="left:938px">5:00</div>
<div class="tt" style="left:1012px"></div>
<div class="xl" style="left:982px">6:00</div>
<div class="tt" style="left:1057px"></div>
<div class="xl" style="left:1027px">7:00</div>
<div class="tt" style="left:1101px"></div>
<div class="xl" style="left:1071px">8:00</div>
<div class="tt" style="left:1145px"></div>
<div class="xl" style="left:1115px">9:00</div>
<div class="tt" style="left:1189px"></div>
<div class="xl" style="left:1159px">10:00</div>
<div class="tt" style="left:1233px"></div>
<div class="xl" style="left:1203px">11:00</div>
<div class="tt" style="left:1277px"></div>
<div class="xl" style="left:1247px">12:00</div>
<div class="tt" style="left:1322px"></div>
<div class="xl" style="left:1292px">13:00</div>
<div class="tt" style="left:1366px"></div>
<div class="xl" style="left:1336px">14:00</div>
<div class="mk" style="top:318px;background:#000"></div>
<div class="mk" style="top:324px;background:#8000c0"></div>
<div class="mk" style="top:328px;background:#f0f000"></div>
<div class="mk" style="top:437px;background:#8000c0"></div>
<div class="mk" style="top:549px;background:#8000c0"></div>
<div class="lab" style="top:298px;background:linear-gradient(#ffe040,#e0b000);color:#000;padding-top:1px"><span>25.624,0</span></div>
<div class="lab" style="top:316px;background:linear-gradient(#444,#000);color:#8000c0;padding-top:1px"><span>25.619,5</span></div>
<div class="lab" style="top:325px;background:linear-gradient(#444,#000);color:#f0f000"><span>25.617,1</span></div>
<div class="lab" style="height:15px;top:430px;background:linear-gradient(#444,#000);color:#8000c0"><span>25.541,8</span></div>
<div class="lab" style="height:15px;top:542px;background:linear-gradient(#444,#000);color:#8000c0"><span>25.464,2</span></div>
</body></html>
